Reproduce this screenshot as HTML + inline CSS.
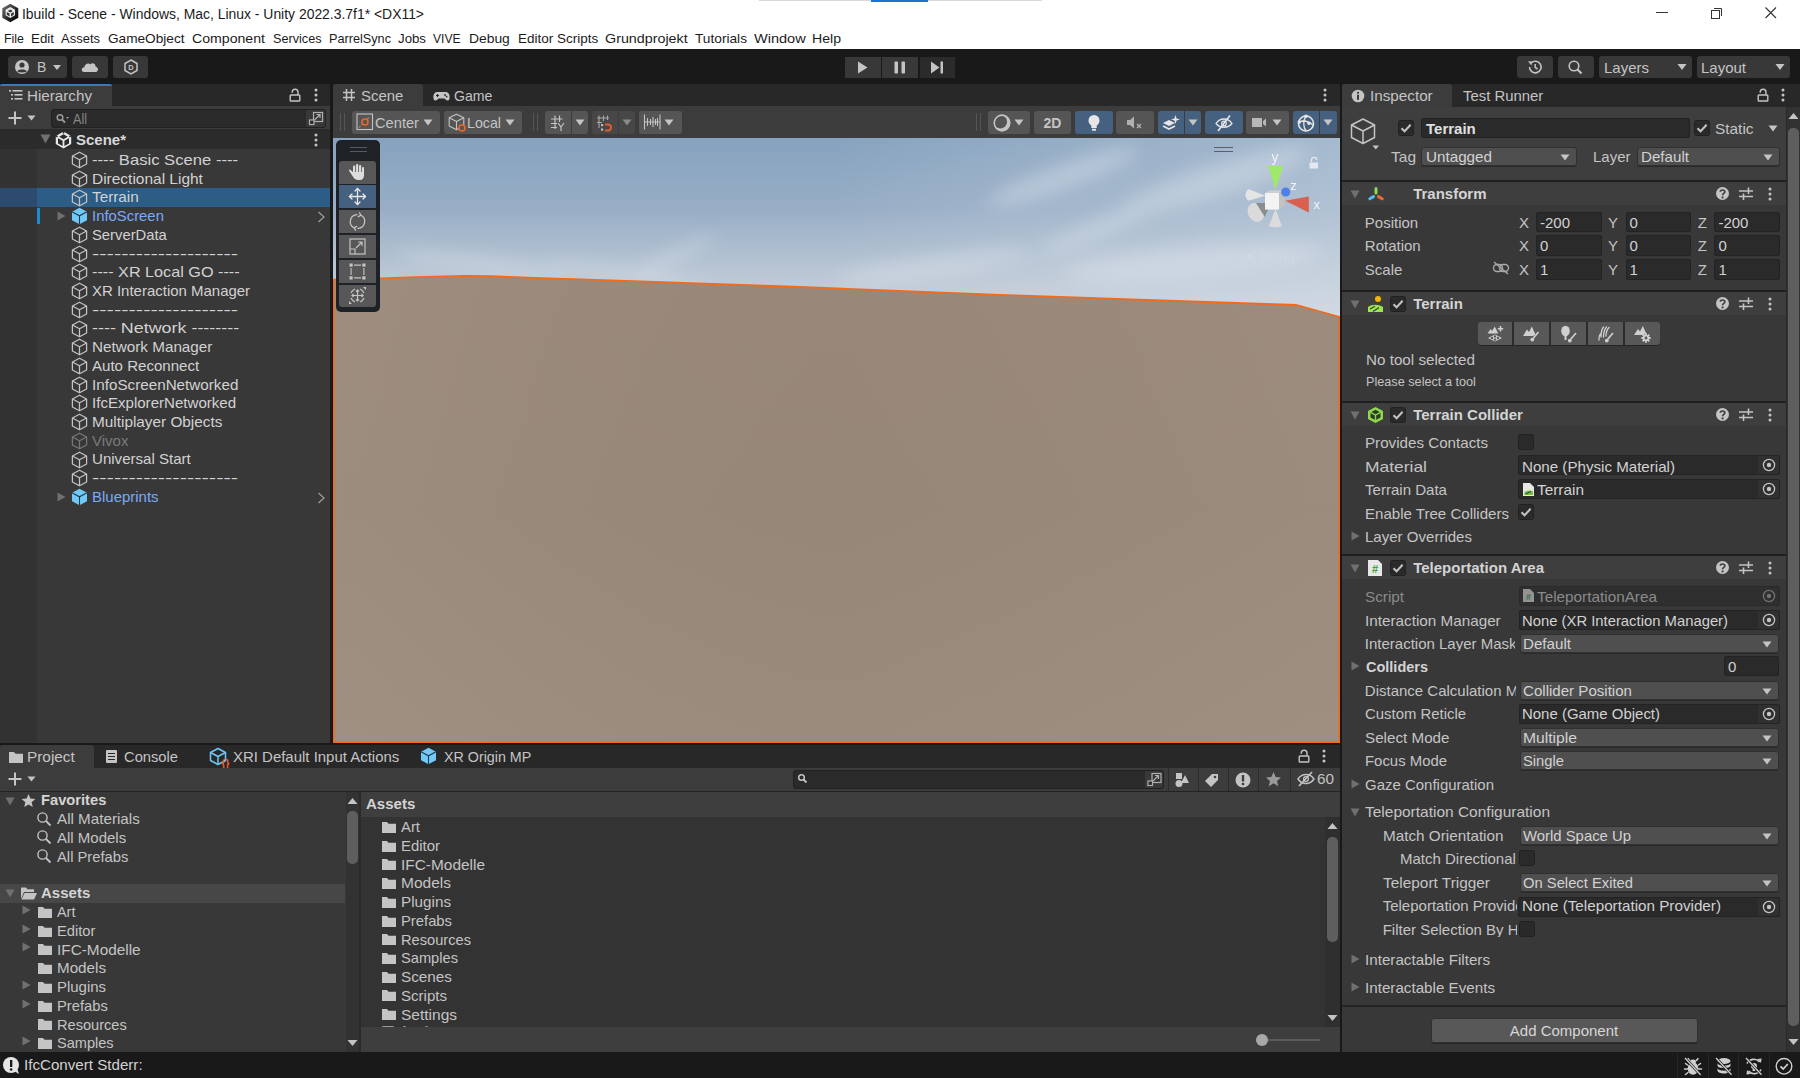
<!DOCTYPE html>
<html><head><meta charset="utf-8"><style>
html,body{margin:0;padding:0;}
body{width:1800px;height:1078px;position:relative;overflow:hidden;background:#191919;font-family:"Liberation Sans",sans-serif;}
.a{position:absolute;}
.t{white-space:nowrap;}
</style></head><body>
<div class="a" style="left:0px;top:0px;width:1800px;height:49px;background:#ffffff;"></div>
<svg class="a" style="left:2px;top:3px;" width="17" height="20" viewBox="0 0 17 20"><defs><linearGradient id="lg" x1="0" y1="0" x2="1" y2="1"><stop offset="0" stop-color="#7a7a7a"/><stop offset="0.6" stop-color="#222"/><stop offset="1" stop-color="#000"/></linearGradient></defs><path d="M8.3 0.7 L16.3 5.2 L16.3 14.8 L8.3 19.3 L0.3 14.8 L0.3 5.2 Z" fill="url(#lg)"/><path d="M8.3 4 L13 6.7 V12.3 L8.3 15 L3.6 12.3 V6.7 Z" fill="#eeeeee"/><path d="M8.3 6.6 L10.8 8 L8.3 9.5 L5.8 8 Z M4.8 9 L7.6 10.6 V13.4 L4.8 11.8 Z M11.8 9 L9 10.6 V13.4 L11.8 11.8 Z" fill="#333"/></svg>
<div class="a t" style="left:22px;top:7.15px;font-size:14px;line-height:14px;color:#1b1b1b;transform:scaleX(0.9941);transform-origin:0 0;">Ibuild - Scene - Windows, Mac, Linux - Unity 2022.3.7f1* &lt;DX11&gt;</div>
<div class="a" style="left:1656px;top:12px;width:12px;height:1px;background:#333;"></div>
<svg class="a" style="left:1708px;top:4px;" width="18" height="18" viewBox="0 0 18 18"><rect x="3.5" y="6.5" width="8" height="8" fill="none" stroke="#333" stroke-width="1"/><path d="M6 4.5 H13.5 V12" fill="none" stroke="#333" stroke-width="1"/></svg>
<svg class="a" style="left:1762px;top:5px;" width="18" height="18" viewBox="0 0 18 18"><path d="M3.5 2.5 L14 13 M14 2.5 L3.5 13" stroke="#333" stroke-width="1.1"/></svg>
<div class="a" style="left:759px;top:0px;width:283px;height:1px;background:#d9d9d9;"></div>
<div class="a" style="left:871px;top:0px;width:57px;height:2px;background:#1e73d2;"></div>
<div class="a t" style="left:4px;top:31.57px;font-size:13.5px;line-height:13.5px;color:#1b1b1b;transform:scaleX(0.9194);transform-origin:0 0;">File</div>
<div class="a t" style="left:31px;top:31.57px;font-size:13.5px;line-height:13.5px;color:#1b1b1b;transform:scaleX(0.9887);transform-origin:0 0;">Edit</div>
<div class="a t" style="left:61px;top:31.57px;font-size:13.5px;line-height:13.5px;color:#1b1b1b;transform:scaleX(0.9626);transform-origin:0 0;">Assets</div>
<div class="a t" style="left:107.5px;top:31.57px;font-size:13.5px;line-height:13.5px;color:#1b1b1b;transform:scaleX(1.0095);transform-origin:0 0;">GameObject</div>
<div class="a t" style="left:192px;top:31.57px;font-size:13.5px;line-height:13.5px;color:#1b1b1b;transform:scaleX(1.0459);transform-origin:0 0;">Component</div>
<div class="a t" style="left:272.5px;top:31.57px;font-size:13.5px;line-height:13.5px;color:#1b1b1b;transform:scaleX(0.9369);transform-origin:0 0;">Services</div>
<div class="a t" style="left:329px;top:31.57px;font-size:13.5px;line-height:13.5px;color:#1b1b1b;transform:scaleX(0.9390);transform-origin:0 0;">ParrelSync</div>
<div class="a t" style="left:398px;top:31.57px;font-size:13.5px;line-height:13.5px;color:#1b1b1b;transform:scaleX(0.9819);transform-origin:0 0;">Jobs</div>
<div class="a t" style="left:433.3px;top:31.57px;font-size:13.5px;line-height:13.5px;color:#1b1b1b;transform:scaleX(0.9004);transform-origin:0 0;">VIVE</div>
<div class="a t" style="left:469px;top:31.57px;font-size:13.5px;line-height:13.5px;color:#1b1b1b;transform:scaleX(1.0256);transform-origin:0 0;">Debug</div>
<div class="a t" style="left:517.5px;top:31.57px;font-size:13.5px;line-height:13.5px;color:#1b1b1b;transform:scaleX(1.0003);transform-origin:0 0;">Editor Scripts</div>
<div class="a t" style="left:605px;top:31.57px;font-size:13.5px;line-height:13.5px;color:#1b1b1b;transform:scaleX(1.0597);transform-origin:0 0;">Grundprojekt</div>
<div class="a t" style="left:695px;top:31.57px;font-size:13.5px;line-height:13.5px;color:#1b1b1b;transform:scaleX(1.0143);transform-origin:0 0;">Tutorials</div>
<div class="a t" style="left:754px;top:31.57px;font-size:13.5px;line-height:13.5px;color:#1b1b1b;transform:scaleX(1.0767);transform-origin:0 0;">Window</div>
<div class="a t" style="left:812px;top:31.57px;font-size:13.5px;line-height:13.5px;color:#1b1b1b;transform:scaleX(1.0445);transform-origin:0 0;">Help</div>
<div class="a" style="left:0px;top:49px;width:1800px;height:35px;background:#191919;"></div>
<div class="a" style="left:8px;top:56px;width:59px;height:22px;background:#383838;border-radius:3px;"></div>
<div class="a" style="left:72px;top:56px;width:36px;height:22px;background:#383838;border-radius:3px;"></div>
<div class="a" style="left:113px;top:56px;width:35px;height:22px;background:#383838;border-radius:3px;"></div>
<svg class="a" style="left:14px;top:59px;" width="16" height="16" viewBox="0 0 16 16"><circle cx="8" cy="8" r="7" fill="#c4c4c4"/><circle cx="8" cy="6" r="2.6" fill="#383838"/><path d="M3.2 12.2 C4.5 9.8 11.5 9.8 12.8 12.2 C11.5 13.8 4.5 13.8 3.2 12.2Z" fill="#383838"/></svg>
<div class="a t" style="left:37px;top:60.15px;font-size:14px;line-height:14px;color:#c4c4c4;">B</div>
<svg class="a" style="left:52px;top:62px;" width="10" height="10" viewBox="0 0 10 10"><path d="M1 3 L9 3 L5 8 Z" fill="#c4c4c4"/></svg>
<svg class="a" style="left:80px;top:59px;" width="20" height="16" viewBox="0 0 20 16"><path d="M4 13 C1 13 1 8.5 4.3 8.3 C4.6 5 8 3.5 10.5 5.2 C11.8 3.5 15.8 4.2 15.6 7.8 C18.8 8 18.8 13 15.6 13 Z" fill="#c4c4c4"/></svg>
<svg class="a" style="left:122px;top:58px;" width="18" height="18" viewBox="0 0 18 18"><path d="M9 2 L15 5.5 L15 12.5 L9 16 L3 12.5 L3 5.5 Z" fill="none" stroke="#c4c4c4" stroke-width="1.5"/><text x="9" y="12.3" font-size="7.5" text-anchor="middle" fill="#c4c4c4" font-family="Liberation Sans" font-weight="bold">D</text></svg>
<div class="a" style="left:845px;top:57px;width:36px;height:21px;background:#383838;"></div>
<div class="a" style="left:882px;top:57px;width:36px;height:21px;background:#383838;"></div>
<div class="a" style="left:920px;top:57px;width:35px;height:21px;background:#2b2b2b;"></div>
<svg class="a" style="left:845px;top:57px;" width="36" height="21" viewBox="0 0 36 21"><path d="M13 4.5 L22.5 10.5 L13 16.5 Z" fill="#c4c4c4"/></svg>
<svg class="a" style="left:882px;top:57px;" width="36" height="21" viewBox="0 0 36 21"><rect x="12.5" y="4.5" width="3.5" height="12" rx="0.8" fill="#c4c4c4"/><rect x="19.5" y="4.5" width="3.5" height="12" rx="0.8" fill="#c4c4c4"/></svg>
<svg class="a" style="left:920px;top:57px;" width="35" height="21" viewBox="0 0 35 21"><path d="M11 4.5 L19.5 10.5 L11 16.5 Z" fill="#c4c4c4"/><rect x="20.5" y="4.5" width="2.5" height="12" fill="#c4c4c4"/></svg>
<div class="a" style="left:1517px;top:56px;width:36px;height:22px;background:#383838;border-radius:3px;"></div>
<div class="a" style="left:1558px;top:56px;width:36px;height:22px;background:#383838;border-radius:3px;"></div>
<div class="a" style="left:1599px;top:56px;width:93px;height:22px;background:#383838;border-radius:3px;"></div>
<div class="a" style="left:1697px;top:56px;width:93px;height:22px;background:#383838;border-radius:3px;"></div>
<svg class="a" style="left:1525px;top:58px;" width="20" height="18" viewBox="0 0 20 18"><path d="M4.5 9 A5.8 5.8 0 1 0 6.2 4.9" fill="none" stroke="#c4c4c4" stroke-width="1.6"/><path d="M3 3.2 L7.2 3.6 L6.4 7.6 Z" fill="#c4c4c4"/><path d="M10.2 6 V9.5 L12.6 11" fill="none" stroke="#c4c4c4" stroke-width="1.5"/></svg>
<svg class="a" style="left:1566px;top:58px;" width="20" height="18" viewBox="0 0 20 18"><circle cx="8" cy="8" r="4.8" fill="none" stroke="#c4c4c4" stroke-width="1.6"/><path d="M11.5 11.5 L15.5 15.5" stroke="#c4c4c4" stroke-width="2.2"/></svg>
<div class="a t" style="left:1604px;top:60.30px;font-size:15px;line-height:15px;color:#c4c4c4;">Layers</div>
<svg class="a" style="left:1677px;top:63px;" width="10" height="8" viewBox="0 0 10 8"><path d="M0.5 1 L9.5 1 L5 7 Z" fill="#c4c4c4"/></svg>
<div class="a t" style="left:1701px;top:60.30px;font-size:15px;line-height:15px;color:#c4c4c4;">Layout</div>
<svg class="a" style="left:1775px;top:63px;" width="10" height="8" viewBox="0 0 10 8"><path d="M0.5 1 L9.5 1 L5 7 Z" fill="#c4c4c4"/></svg>
<div class="a" style="left:0px;top:84px;width:330px;height:22px;background:#282828;"></div>
<div class="a" style="left:0px;top:84px;width:112px;height:22px;background:#3c3c3c;border-radius:3px 3px 0 0;"></div>
<div class="a" style="left:0px;top:84px;width:112px;height:2px;background:#3a79bb;border-radius:3px 3px 0 0;"></div>
<svg class="a" style="left:8px;top:88px;" width="16" height="14" viewBox="0 0 16 14"><g fill="#c4c4c4"><rect x="1" y="2" width="2" height="1.6"/><rect x="4.5" y="2" width="10" height="1.6"/><rect x="3" y="6" width="2" height="1.6"/><rect x="6.5" y="6" width="8" height="1.6"/><rect x="3" y="10" width="2" height="1.6"/><rect x="6.5" y="10" width="8" height="1.6"/></g></svg>
<div class="a t" style="left:27px;top:87.80px;font-size:15px;line-height:15px;color:#c4c4c4;transform:scaleX(1.0127);transform-origin:0 0;">Hierarchy</div>
<svg class="a" style="left:289px;top:88px;" width="12" height="14" viewBox="0 0 12 14"><path d="M3.2 4.8 V4.2 A2.9 2.9 0 0 1 9 4.2 V7" fill="none" stroke="#c4c4c4" stroke-width="1.4"/><rect x="1.2" y="7" width="9.6" height="6" rx="0.8" fill="none" stroke="#c4c4c4" stroke-width="1.4"/></svg>
<svg class="a" style="left:314px;top:88px;" width="4" height="14" viewBox="0 0 4 14"><circle cx="2" cy="2" r="1.5" fill="#c4c4c4"/><circle cx="2" cy="7" r="1.5" fill="#c4c4c4"/><circle cx="2" cy="12" r="1.5" fill="#c4c4c4"/></svg>
<div class="a" style="left:0px;top:106px;width:330px;height:24px;background:#3c3c3c;"></div>
<div class="a" style="left:0px;top:129px;width:330px;height:1px;background:#2a2a2a;"></div>
<svg class="a" style="left:7px;top:110px;" width="16" height="16" viewBox="0 0 16 16"><path d="M8 1.5 V14.5 M1.5 8 H14.5" stroke="#c4c4c4" stroke-width="2"/></svg>
<svg class="a" style="left:27px;top:115px;" width="9" height="6" viewBox="0 0 9 6"><path d="M0.5 0.5 L8.5 0.5 L4.5 5.5 Z" fill="#c4c4c4"/></svg>
<div class="a" style="left:51px;top:109px;width:275px;height:19px;background:#2a2a2a;border-radius:4px;box-shadow:inset 0 0 0 1px #212121;"></div>
<svg class="a" style="left:55px;top:112px;" width="16" height="13" viewBox="0 0 16 13"><circle cx="5" cy="5.5" r="2.8" fill="none" stroke="#9a9a9a" stroke-width="1.5"/><path d="M7 7.5 L10 10.5" stroke="#9a9a9a" stroke-width="1.8"/><path d="M11 5 L14 5 L12.5 7 Z" fill="#9a9a9a"/></svg>
<div class="a t" style="left:73px;top:111.65px;font-size:14px;line-height:14px;color:#858585;transform:scaleX(0.8998);transform-origin:0 0;">All</div>
<div class="a" style="left:306px;top:110px;width:19px;height:17px;background:#383838;border-radius:0 3px 3px 0;"></div>
<svg class="a" style="left:307px;top:110px;" width="18" height="17" viewBox="0 0 18 17"><rect x="6.5" y="2.5" width="9" height="9" fill="none" stroke="#b0b0b0" stroke-width="1.2"/><rect x="2.5" y="10" width="4.5" height="4.5" fill="#2a2a2a" stroke="#b0b0b0" stroke-width="1.2"/><path d="M7.5 10 L13 4.5 M9.5 4.5 H13 V8" fill="none" stroke="#b0b0b0" stroke-width="1.2"/></svg>
<div class="a" style="left:0px;top:130px;width:330px;height:613px;background:#383838;"></div>
<div class="a" style="left:0px;top:148px;width:37px;height:595px;background:#323232;"></div>
<div class="a" style="left:0px;top:130px;width:330px;height:19px;background:#2b2b2b;"></div>
<svg class="a" style="left:40px;top:134px;" width="11" height="10" viewBox="0 0 11 10"><path d="M0.5 0.5 L10.5 0.5 L5.5 9.5 Z" fill="#707070"/></svg>
<svg class="a" style="left:55px;top:131px;" width="17" height="18" viewBox="0 0 17 18"><path d="M8.5 0.6 L16.2 5 L16.2 13 L8.5 17.4 L0.8 13 L0.8 5 Z" fill="#e8e8e8"/><path d="M8.5 3.2 L12.8 5.7 L8.5 8.2 L4.2 5.7 Z" fill="#2b2b2b"/><path d="M3 7.3 L7.6 9.8 V15 L3 12.4 Z M14 7.3 L9.4 9.8 V15 L14 12.4 Z" fill="#2b2b2b"/><path d="M8.5 0 V2.5 M0.5 4.6 L2.6 5.8 M16.5 4.6 L14.4 5.8" stroke="#2b2b2b" stroke-width="1.6"/></svg>
<div class="a t" style="left:76px;top:132.30px;font-size:15px;line-height:15px;color:#d8d8d8;font-weight:bold;transform:scaleX(0.9993);transform-origin:0 0;">Scene*</div>
<svg class="a" style="left:314px;top:133px;" width="4" height="14" viewBox="0 0 4 14"><circle cx="2" cy="2" r="1.5" fill="#c4c4c4"/><circle cx="2" cy="7" r="1.5" fill="#c4c4c4"/><circle cx="2" cy="12" r="1.5" fill="#c4c4c4"/></svg>
<svg class="a" style="left:71px;top:151px;" width="17" height="18" viewBox="0 0 17 18"><g fill="none" stroke="#c4c4c4" stroke-width="1.25" stroke-linejoin="round" opacity="1.0"><path d="M8.5 1.2 L15.6 5 L15.6 13 L8.5 16.8 L1.4 13 L1.4 5 Z"/><path d="M1.4 5 L8.5 8.8 L15.6 5 M8.5 8.8 L8.5 16.8"/></g></svg>
<div class="a t" style="left:91.8px;top:151.90px;font-size:15px;line-height:15px;color:#d2d2d2;transform:scaleX(1.1095);transform-origin:0 0;">---- Basic Scene ----</div>
<svg class="a" style="left:71px;top:170px;" width="17" height="18" viewBox="0 0 17 18"><g fill="none" stroke="#c4c4c4" stroke-width="1.25" stroke-linejoin="round" opacity="1.0"><path d="M8.5 1.2 L15.6 5 L15.6 13 L8.5 16.8 L1.4 13 L1.4 5 Z"/><path d="M1.4 5 L8.5 8.8 L15.6 5 M8.5 8.8 L8.5 16.8"/></g></svg>
<div class="a t" style="left:91.8px;top:170.62px;font-size:15px;line-height:15px;color:#d2d2d2;transform:scaleX(1.0311);transform-origin:0 0;">Directional Light</div>
<div class="a" style="left:0px;top:188px;width:37px;height:19px;background:#2d4b6e;"></div>
<div class="a" style="left:37px;top:188px;width:293px;height:19px;background:#2c5d87;"></div>
<svg class="a" style="left:71px;top:189px;" width="17" height="18" viewBox="0 0 17 18"><g fill="none" stroke="#c4c4c4" stroke-width="1.25" stroke-linejoin="round" opacity="1.0"><path d="M8.5 1.2 L15.6 5 L15.6 13 L8.5 16.8 L1.4 13 L1.4 5 Z"/><path d="M1.4 5 L8.5 8.8 L15.6 5 M8.5 8.8 L8.5 16.8"/></g></svg>
<div class="a t" style="left:91.8px;top:189.34px;font-size:15px;line-height:15px;color:#d2d2d2;transform:scaleX(1.0185);transform-origin:0 0;">Terrain</div>
<svg class="a" style="left:57px;top:211px;" width="9" height="10" viewBox="0 0 9 10"><path d="M0.5 0.5 L8.5 5.0 L0.5 9.5 Z" fill="#707070"/></svg>
<svg class="a" style="left:71px;top:207px;" width="17" height="18" viewBox="0 0 17 18"><path d="M8.5 0.8 L16 4.8 L16 13.2 L8.5 17.2 L1 13.2 L1 4.8 Z" fill="#71c9f7"/><path d="M1 4.8 L8.5 8.8 L16 4.8 M8.5 8.8 L8.5 17.2" fill="none" stroke="#1f3a4e" stroke-width="1.1"/></svg>
<svg class="a" style="left:317px;top:211px;" width="9" height="12" viewBox="0 0 9 12"><path d="M1.5 1 L7 6 L1.5 11" fill="none" stroke="#9a9a9a" stroke-width="1.3"/></svg>
<div class="a t" style="left:91.8px;top:208.06px;font-size:15px;line-height:15px;color:#7baaf7;transform:scaleX(0.9911);transform-origin:0 0;">InfoScreen</div>
<svg class="a" style="left:71px;top:226px;" width="17" height="18" viewBox="0 0 17 18"><g fill="none" stroke="#c4c4c4" stroke-width="1.25" stroke-linejoin="round" opacity="1.0"><path d="M8.5 1.2 L15.6 5 L15.6 13 L8.5 16.8 L1.4 13 L1.4 5 Z"/><path d="M1.4 5 L8.5 8.8 L15.6 5 M8.5 8.8 L8.5 16.8"/></g></svg>
<div class="a t" style="left:91.8px;top:226.78px;font-size:15px;line-height:15px;color:#d2d2d2;transform:scaleX(0.9859);transform-origin:0 0;">ServerData</div>
<svg class="a" style="left:71px;top:245px;" width="17" height="18" viewBox="0 0 17 18"><g fill="none" stroke="#c4c4c4" stroke-width="1.25" stroke-linejoin="round" opacity="1.0"><path d="M8.5 1.2 L15.6 5 L15.6 13 L8.5 16.8 L1.4 13 L1.4 5 Z"/><path d="M1.4 5 L8.5 8.8 L15.6 5 M8.5 8.8 L8.5 16.8"/></g></svg>
<div class="a t" style="left:91.8px;top:245.50px;font-size:15px;line-height:15px;color:#d2d2d2;transform:scaleX(1.4623);transform-origin:0 0;">--------------------</div>
<svg class="a" style="left:71px;top:263px;" width="17" height="18" viewBox="0 0 17 18"><g fill="none" stroke="#c4c4c4" stroke-width="1.25" stroke-linejoin="round" opacity="1.0"><path d="M8.5 1.2 L15.6 5 L15.6 13 L8.5 16.8 L1.4 13 L1.4 5 Z"/><path d="M1.4 5 L8.5 8.8 L15.6 5 M8.5 8.8 L8.5 16.8"/></g></svg>
<div class="a t" style="left:91.8px;top:264.22px;font-size:15px;line-height:15px;color:#d2d2d2;transform:scaleX(1.0800);transform-origin:0 0;">---- XR Local GO ----</div>
<svg class="a" style="left:71px;top:282px;" width="17" height="18" viewBox="0 0 17 18"><g fill="none" stroke="#c4c4c4" stroke-width="1.25" stroke-linejoin="round" opacity="1.0"><path d="M8.5 1.2 L15.6 5 L15.6 13 L8.5 16.8 L1.4 13 L1.4 5 Z"/><path d="M1.4 5 L8.5 8.8 L15.6 5 M8.5 8.8 L8.5 16.8"/></g></svg>
<div class="a t" style="left:91.8px;top:282.94px;font-size:15px;line-height:15px;color:#d2d2d2;transform:scaleX(0.9980);transform-origin:0 0;">XR Interaction Manager</div>
<svg class="a" style="left:71px;top:301px;" width="17" height="18" viewBox="0 0 17 18"><g fill="none" stroke="#c4c4c4" stroke-width="1.25" stroke-linejoin="round" opacity="1.0"><path d="M8.5 1.2 L15.6 5 L15.6 13 L8.5 16.8 L1.4 13 L1.4 5 Z"/><path d="M1.4 5 L8.5 8.8 L15.6 5 M8.5 8.8 L8.5 16.8"/></g></svg>
<div class="a t" style="left:91.8px;top:301.66px;font-size:15px;line-height:15px;color:#d2d2d2;transform:scaleX(1.4623);transform-origin:0 0;">--------------------</div>
<svg class="a" style="left:71px;top:320px;" width="17" height="18" viewBox="0 0 17 18"><g fill="none" stroke="#c4c4c4" stroke-width="1.25" stroke-linejoin="round" opacity="1.0"><path d="M8.5 1.2 L15.6 5 L15.6 13 L8.5 16.8 L1.4 13 L1.4 5 Z"/><path d="M1.4 5 L8.5 8.8 L15.6 5 M8.5 8.8 L8.5 16.8"/></g></svg>
<div class="a t" style="left:91.8px;top:320.38px;font-size:15px;line-height:15px;color:#d2d2d2;transform:scaleX(1.1931);transform-origin:0 0;">---- Network --------</div>
<svg class="a" style="left:71px;top:338px;" width="17" height="18" viewBox="0 0 17 18"><g fill="none" stroke="#c4c4c4" stroke-width="1.25" stroke-linejoin="round" opacity="1.0"><path d="M8.5 1.2 L15.6 5 L15.6 13 L8.5 16.8 L1.4 13 L1.4 5 Z"/><path d="M1.4 5 L8.5 8.8 L15.6 5 M8.5 8.8 L8.5 16.8"/></g></svg>
<div class="a t" style="left:91.8px;top:339.10px;font-size:15px;line-height:15px;color:#d2d2d2;transform:scaleX(1.0170);transform-origin:0 0;">Network Manager</div>
<svg class="a" style="left:71px;top:357px;" width="17" height="18" viewBox="0 0 17 18"><g fill="none" stroke="#c4c4c4" stroke-width="1.25" stroke-linejoin="round" opacity="1.0"><path d="M8.5 1.2 L15.6 5 L15.6 13 L8.5 16.8 L1.4 13 L1.4 5 Z"/><path d="M1.4 5 L8.5 8.8 L15.6 5 M8.5 8.8 L8.5 16.8"/></g></svg>
<div class="a t" style="left:91.8px;top:357.82px;font-size:15px;line-height:15px;color:#d2d2d2;transform:scaleX(1.0043);transform-origin:0 0;">Auto Reconnect</div>
<svg class="a" style="left:71px;top:376px;" width="17" height="18" viewBox="0 0 17 18"><g fill="none" stroke="#c4c4c4" stroke-width="1.25" stroke-linejoin="round" opacity="1.0"><path d="M8.5 1.2 L15.6 5 L15.6 13 L8.5 16.8 L1.4 13 L1.4 5 Z"/><path d="M1.4 5 L8.5 8.8 L15.6 5 M8.5 8.8 L8.5 16.8"/></g></svg>
<div class="a t" style="left:91.8px;top:376.54px;font-size:15px;line-height:15px;color:#d2d2d2;transform:scaleX(1.0149);transform-origin:0 0;">InfoScreenNetworked</div>
<svg class="a" style="left:71px;top:394px;" width="17" height="18" viewBox="0 0 17 18"><g fill="none" stroke="#c4c4c4" stroke-width="1.25" stroke-linejoin="round" opacity="1.0"><path d="M8.5 1.2 L15.6 5 L15.6 13 L8.5 16.8 L1.4 13 L1.4 5 Z"/><path d="M1.4 5 L8.5 8.8 L15.6 5 M8.5 8.8 L8.5 16.8"/></g></svg>
<div class="a t" style="left:91.8px;top:395.26px;font-size:15px;line-height:15px;color:#d2d2d2;transform:scaleX(1.0049);transform-origin:0 0;">IfcExplorerNetworked</div>
<svg class="a" style="left:71px;top:413px;" width="17" height="18" viewBox="0 0 17 18"><g fill="none" stroke="#c4c4c4" stroke-width="1.25" stroke-linejoin="round" opacity="1.0"><path d="M8.5 1.2 L15.6 5 L15.6 13 L8.5 16.8 L1.4 13 L1.4 5 Z"/><path d="M1.4 5 L8.5 8.8 L15.6 5 M8.5 8.8 L8.5 16.8"/></g></svg>
<div class="a t" style="left:91.8px;top:413.98px;font-size:15px;line-height:15px;color:#d2d2d2;transform:scaleX(1.0224);transform-origin:0 0;">Multiplayer Objects</div>
<svg class="a" style="left:71px;top:432px;" width="17" height="18" viewBox="0 0 17 18"><g fill="none" stroke="#c4c4c4" stroke-width="1.25" stroke-linejoin="round" opacity="0.45"><path d="M8.5 1.2 L15.6 5 L15.6 13 L8.5 16.8 L1.4 13 L1.4 5 Z"/><path d="M1.4 5 L8.5 8.8 L15.6 5 M8.5 8.8 L8.5 16.8"/></g></svg>
<div class="a t" style="left:91.8px;top:432.70px;font-size:15px;line-height:15px;color:#7a7a7a;transform:scaleX(1.0025);transform-origin:0 0;">Vivox</div>
<svg class="a" style="left:71px;top:451px;" width="17" height="18" viewBox="0 0 17 18"><g fill="none" stroke="#c4c4c4" stroke-width="1.25" stroke-linejoin="round" opacity="1.0"><path d="M8.5 1.2 L15.6 5 L15.6 13 L8.5 16.8 L1.4 13 L1.4 5 Z"/><path d="M1.4 5 L8.5 8.8 L15.6 5 M8.5 8.8 L8.5 16.8"/></g></svg>
<div class="a t" style="left:91.8px;top:451.42px;font-size:15px;line-height:15px;color:#d2d2d2;transform:scaleX(1.0044);transform-origin:0 0;">Universal Start</div>
<svg class="a" style="left:71px;top:469px;" width="17" height="18" viewBox="0 0 17 18"><g fill="none" stroke="#c4c4c4" stroke-width="1.25" stroke-linejoin="round" opacity="1.0"><path d="M8.5 1.2 L15.6 5 L15.6 13 L8.5 16.8 L1.4 13 L1.4 5 Z"/><path d="M1.4 5 L8.5 8.8 L15.6 5 M8.5 8.8 L8.5 16.8"/></g></svg>
<div class="a t" style="left:91.8px;top:470.14px;font-size:15px;line-height:15px;color:#d2d2d2;transform:scaleX(1.4623);transform-origin:0 0;">--------------------</div>
<svg class="a" style="left:57px;top:492px;" width="9" height="10" viewBox="0 0 9 10"><path d="M0.5 0.5 L8.5 5.0 L0.5 9.5 Z" fill="#707070"/></svg>
<svg class="a" style="left:71px;top:488px;" width="17" height="18" viewBox="0 0 17 18"><path d="M8.5 0.8 L16 4.8 L16 13.2 L8.5 17.2 L1 13.2 L1 4.8 Z" fill="#71c9f7"/><path d="M1 4.8 L8.5 8.8 L16 4.8 M8.5 8.8 L8.5 17.2" fill="none" stroke="#1f3a4e" stroke-width="1.1"/></svg>
<svg class="a" style="left:317px;top:492px;" width="9" height="12" viewBox="0 0 9 12"><path d="M1.5 1 L7 6 L1.5 11" fill="none" stroke="#9a9a9a" stroke-width="1.3"/></svg>
<div class="a t" style="left:91.8px;top:488.86px;font-size:15px;line-height:15px;color:#7baaf7;transform:scaleX(0.9984);transform-origin:0 0;">Blueprints</div>
<div class="a" style="left:37px;top:208px;width:3px;height:16px;background:#1d8ad6;"></div>
<div class="a" style="left:333px;top:84px;width:1007px;height:22px;background:#282828;"></div>
<div class="a" style="left:333px;top:84px;width:90px;height:23px;background:#3c3c3c;border-radius:3px 3px 0 0;"></div>
<svg class="a" style="left:342px;top:88px;" width="14" height="14" viewBox="0 0 14 14"><g stroke="#c4c4c4" stroke-width="1.5"><path d="M4.5 1 V13 M9.5 1 V13 M1 4.5 H13 M1 9.5 H13"/></g></svg>
<div class="a t" style="left:361px;top:87.80px;font-size:15px;line-height:15px;color:#c4c4c4;transform:scaleX(0.9945);transform-origin:0 0;">Scene</div>
<svg class="a" style="left:433px;top:90px;" width="17" height="12" viewBox="0 0 17 12"><path d="M4 2 H13 C16 2 17 6 16.5 8.5 C16 11 14 11 12.5 9.5 L11.5 8.5 H5.5 L4.5 9.5 C3 11 1 11 0.5 8.5 C0 6 1 2 4 2Z" fill="#c4c4c4"/><path d="M3 5.5 H6 M4.5 4 V7" stroke="#282828" stroke-width="1.1"/><circle cx="12" cy="5" r="0.9" fill="#282828"/><circle cx="13.6" cy="6.6" r="0.9" fill="#282828"/></svg>
<div class="a t" style="left:453.6px;top:87.80px;font-size:15px;line-height:15px;color:#c4c4c4;transform:scaleX(0.9401);transform-origin:0 0;">Game</div>
<svg class="a" style="left:1323px;top:88px;" width="4" height="14" viewBox="0 0 4 14"><circle cx="2" cy="2" r="1.5" fill="#c4c4c4"/><circle cx="2" cy="7" r="1.5" fill="#c4c4c4"/><circle cx="2" cy="12" r="1.5" fill="#c4c4c4"/></svg>
<div class="a" style="left:333px;top:106px;width:1007px;height:31px;background:#3c3c3c;"></div>
<div class="a" style="left:340px;top:113px;width:1px;height:18px;background:#555555;"></div>
<div class="a" style="left:344px;top:113px;width:1px;height:18px;background:#555555;"></div>
<div class="a" style="left:352px;top:111px;width:88px;height:23px;background:#555555;border-radius:3px;"></div>
<svg class="a" style="left:356px;top:113px;" width="18" height="18" viewBox="0 0 18 18"><rect x="1" y="1" width="15.5" height="15.5" fill="none" stroke="#c4c4c4" stroke-width="1.1"/><path d="M3 14.5 L14.5 3" stroke="#c4c4c4" stroke-width="1" stroke-dasharray="2 2"/><circle cx="9" cy="9" r="3" fill="#555555" stroke="#f0642a" stroke-width="1.6"/></svg>
<div class="a t" style="left:375px;top:114.50px;font-size:15px;line-height:15px;color:#c4c4c4;transform:scaleX(0.9773);transform-origin:0 0;">Center</div>
<svg class="a" style="left:423px;top:119px;" width="10" height="7" viewBox="0 0 10 7"><path d="M0.5 0.5 L9.5 0.5 L5 6.5 Z" fill="#c4c4c4"/></svg>
<div class="a" style="left:444px;top:111px;width:78px;height:23px;background:#555555;border-radius:3px;"></div>
<svg class="a" style="left:448px;top:113px;" width="20" height="20" viewBox="0 0 20 20"><g fill="none" stroke="#c4c4c4" stroke-width="1.1" stroke-linejoin="round"><path d="M8.5 1.2 L15.8 4.8 L15.8 13 L8.5 16.8 L1.2 13 L1.2 4.8 Z"/><path d="M1.2 4.8 L8.5 8.6 L15.8 4.8 M8.5 8.6 V16.8"/></g><circle cx="14" cy="15" r="3" fill="#555555" stroke="#f0642a" stroke-width="1.6"/></svg>
<div class="a t" style="left:467.4px;top:114.50px;font-size:15px;line-height:15px;color:#c4c4c4;transform:scaleX(0.9481);transform-origin:0 0;">Local</div>
<svg class="a" style="left:505px;top:119px;" width="10" height="7" viewBox="0 0 10 7"><path d="M0.5 0.5 L9.5 0.5 L5 6.5 Z" fill="#c4c4c4"/></svg>
<div class="a" style="left:533px;top:113px;width:1px;height:18px;background:#555555;"></div>
<div class="a" style="left:537px;top:113px;width:1px;height:18px;background:#555555;"></div>
<div class="a" style="left:545px;top:111px;width:26px;height:23px;background:#555555;border-radius:3px 0 0 3px;"></div>
<div class="a" style="left:572px;top:111px;width:16px;height:23px;background:#555555;border-radius:0 3px 3px 0;"></div>
<svg class="a" style="left:549px;top:114px;" width="18" height="18" viewBox="0 0 18 18"><g stroke="#c4c4c4" stroke-width="1.2" fill="none"><path d="M6 1.5 V15 M10.5 1.5 V8 M2 5 H13.5 M2 9.5 H8 M2 13.5 H8"/><path d="M9 9 L12 13 L15 9 M12 13 V17"/></g></svg>
<svg class="a" style="left:575px;top:119px;" width="10" height="7" viewBox="0 0 10 7"><path d="M0.5 0.5 L9.5 0.5 L5 6.5 Z" fill="#c4c4c4"/></svg>
<div class="a" style="left:592px;top:111px;width:26px;height:23px;background:#474747;border-radius:3px 0 0 3px;"></div>
<div class="a" style="left:619px;top:111px;width:16px;height:23px;background:#474747;border-radius:0 3px 3px 0;"></div>
<svg class="a" style="left:596px;top:114px;" width="18" height="18" viewBox="0 0 18 18"><g stroke="#b8b8b8" stroke-width="1.1" fill="none" opacity="0.85"><path d="M3 1.5 V14 M7.5 1.5 V7 M11.5 1.5 V6 M1 4 H13 M1 8.5 H6"/></g><rect x="5" y="10" width="2.2" height="2.2" fill="#bbb"/><rect x="5" y="14.5" width="2.2" height="2.2" fill="#bbb"/><path d="M9 10.5 H12 A3 3 0 0 1 12 16.5 H9" fill="none" stroke="#e0602a" stroke-width="1.8"/></svg>
<svg class="a" style="left:622px;top:119px;" width="10" height="7" viewBox="0 0 10 7"><path d="M0.5 0.5 L9.5 0.5 L5 6.5 Z" fill="#8a8a8a"/></svg>
<div class="a" style="left:639px;top:111px;width:43px;height:23px;background:#555555;border-radius:3px;"></div>
<svg class="a" style="left:643px;top:114px;" width="20" height="17" viewBox="0 0 20 17"><g stroke="#c4c4c4" stroke-width="1.1"><path d="M1.5 0.5 V15.5 M17 0.5 V15.5 M1.5 8 H17"/><path d="M4.5 4 V12 M7.5 5 V11 M10 3 V13 M12.5 5 V11 M14.5 4 V12"/></g></svg>
<svg class="a" style="left:664px;top:119px;" width="10" height="7" viewBox="0 0 10 7"><path d="M0.5 0.5 L9.5 0.5 L5 6.5 Z" fill="#c4c4c4"/></svg>
<div class="a" style="left:976px;top:113px;width:1px;height:18px;background:#555555;"></div>
<div class="a" style="left:980px;top:113px;width:1px;height:18px;background:#555555;"></div>
<div class="a" style="left:988px;top:111px;width:42px;height:23px;background:#555555;border-radius:3px;"></div>
<svg class="a" style="left:992px;top:113px;" width="20" height="20" viewBox="0 0 20 20"><circle cx="10" cy="10" r="8.4" fill="#c4c4c4"/><circle cx="8.4" cy="8.7" r="6.7" fill="#555555"/><circle cx="10" cy="10" r="7.7" fill="none" stroke="#c4c4c4" stroke-width="1.4"/></svg>
<svg class="a" style="left:1014px;top:119px;" width="10" height="7" viewBox="0 0 10 7"><path d="M0.5 0.5 L9.5 0.5 L5 6.5 Z" fill="#c4c4c4"/></svg>
<div class="a" style="left:1034px;top:111px;width:37px;height:23px;background:#555555;border-radius:3px;"></div>
<div class="a t" style="left:752.5px;width:600px;text-align:center;top:115.65px;font-size:14px;line-height:14px;color:#c4c4c4;font-weight:bold;">2D</div>
<div class="a" style="left:1075px;top:111px;width:38px;height:23px;background:#46607f;border-radius:3px;"></div>
<svg class="a" style="left:1085px;top:113px;" width="18" height="20" viewBox="0 0 18 20"><circle cx="9" cy="7.5" r="5.5" fill="#e6e6e6"/><rect x="6.3" y="11.5" width="5.4" height="3.5" fill="#e6e6e6"/><rect x="6.8" y="15.8" width="4.4" height="2" rx="1" fill="#e6e6e6"/></svg>
<div class="a" style="left:1116px;top:111px;width:38px;height:23px;background:#555555;border-radius:3px;"></div>
<svg class="a" style="left:1125px;top:113px;" width="20" height="20" viewBox="0 0 20 20"><path d="M2 7 H5 L9 3.5 V15.5 L5 12 H2 Z" fill="#b0b0b0"/><path d="M12 11 L16 15 M16 11 L12 15" stroke="#b0b0b0" stroke-width="1.3"/></svg>
<div class="a" style="left:1158px;top:111px;width:26px;height:23px;background:#46607f;border-radius:3px 0 0 3px;"></div>
<div class="a" style="left:1185px;top:111px;width:16px;height:23px;background:#46607f;border-radius:0 3px 3px 0;"></div>
<svg class="a" style="left:1161px;top:113px;" width="20" height="20" viewBox="0 0 20 20"><path d="M2 10 L8 7 L14 10 L8 13 Z" fill="#e6e6e6"/><path d="M2 13 L8 16 L14 13" fill="none" stroke="#e6e6e6" stroke-width="1.6"/><path d="M14.5 2 L15.6 5.4 L19 6.5 L15.6 7.6 L14.5 11 L13.4 7.6 L10 6.5 L13.4 5.4 Z" fill="#e6e6e6"/></svg>
<svg class="a" style="left:1188px;top:119px;" width="10" height="7" viewBox="0 0 10 7"><path d="M0.5 0.5 L9.5 0.5 L5 6.5 Z" fill="#c4c4c4"/></svg>
<div class="a" style="left:1205px;top:111px;width:38px;height:23px;background:#46607f;border-radius:3px;"></div>
<svg class="a" style="left:1214px;top:113px;" width="20" height="20" viewBox="0 0 20 20"><path d="M2 10.5 C6 4.5 14 4.5 18 10.5 C14 15.5 6 15.5 2 10.5Z" fill="none" stroke="#e6e6e6" stroke-width="1.3"/><circle cx="10" cy="10.5" r="2.3" fill="none" stroke="#e6e6e6" stroke-width="1.2"/><path d="M4 18 L16 2.5" stroke="#e6e6e6" stroke-width="1.6"/></svg>
<div class="a" style="left:1246px;top:111px;width:43px;height:23px;background:#555555;border-radius:3px;"></div>
<svg class="a" style="left:1251px;top:115px;" width="20" height="15" viewBox="0 0 20 15"><rect x="1" y="3" width="10" height="9" fill="#b8b8b8"/><path d="M12 6 L15 3.5 V11.5 L12 9Z" fill="#b8b8b8"/></svg>
<svg class="a" style="left:1272px;top:119px;" width="10" height="7" viewBox="0 0 10 7"><path d="M0.5 0.5 L9.5 0.5 L5 6.5 Z" fill="#c4c4c4"/></svg>
<div class="a" style="left:1293px;top:111px;width:26px;height:23px;background:#46607f;border-radius:3px 0 0 3px;"></div>
<div class="a" style="left:1320px;top:111px;width:17px;height:23px;background:#46607f;border-radius:0 3px 3px 0;"></div>
<svg class="a" style="left:1296px;top:113px;" width="20" height="20" viewBox="0 0 20 20"><circle cx="10" cy="10.5" r="7.5" fill="none" stroke="#e6e6e6" stroke-width="1.6"/><path d="M3 9 C7 7 13 8 17 12 M10 3 C7 7 7 14 10 18" fill="none" stroke="#e6e6e6" stroke-width="1.3"/><circle cx="10" cy="3.2" r="1.8" fill="#e6e6e6"/><circle cx="3.3" cy="9" r="1.8" fill="#e6e6e6"/><circle cx="13" cy="10.2" r="1.8" fill="#e6e6e6"/></svg>
<svg class="a" style="left:1323px;top:119px;" width="10" height="7" viewBox="0 0 10 7"><path d="M0.5 0.5 L9.5 0.5 L5 6.5 Z" fill="#c4c4c4"/></svg>
<svg class="a" style="left:333px;top:137px;" width="1007" height="606" viewBox="0 0 1007 606"><defs>
<linearGradient id="sky" gradientUnits="userSpaceOnUse" x1="0" y1="0" x2="0" y2="180">
<stop offset="0" stop-color="#86a2be"/><stop offset="0.4" stop-color="#98aec6"/><stop offset="0.75" stop-color="#b9c6d4"/><stop offset="1" stop-color="#cad3dd"/></linearGradient>
<linearGradient id="skyr" gradientUnits="userSpaceOnUse" x1="500" y1="0" x2="1007" y2="0">
<stop offset="0" stop-color="#dfe6ee" stop-opacity="0"/><stop offset="1" stop-color="#dfe6ee" stop-opacity="0.35"/></linearGradient>
<linearGradient id="ter" gradientUnits="userSpaceOnUse" x1="0" y1="140" x2="0" y2="606">
<stop offset="0" stop-color="#9b8a7b"/><stop offset="0.5" stop-color="#99897a"/><stop offset="1" stop-color="#9d8d7f"/></linearGradient>
<linearGradient id="terx" gradientUnits="userSpaceOnUse" x1="0" y1="0" x2="1007" y2="0">
<stop offset="0" stop-color="#ffffff" stop-opacity="0.03"/><stop offset="0.5" stop-color="#000000" stop-opacity="0.015"/><stop offset="1" stop-color="#ffffff" stop-opacity="0.02"/></linearGradient>
<filter id="blur" x="-50%" y="-50%" width="200%" height="200%"><feGaussianBlur stdDeviation="9"/></filter>
</defs>
<rect x="0" y="0" width="1007" height="606" fill="url(#sky)"/>
<rect x="0" y="0" width="1007" height="180" fill="url(#skyr)"/>
<g filter="url(#blur)" fill="#e2e8ef" opacity="0.4">
<ellipse cx="150" cy="128" rx="90" ry="7" transform="rotate(8 150 128)"/>
<ellipse cx="300" cy="140" rx="90" ry="6" transform="rotate(10 300 140)"/>
<ellipse cx="340" cy="120" rx="50" ry="6" transform="rotate(-25 340 120)"/>
<ellipse cx="600" cy="130" rx="100" ry="10" transform="rotate(-8 600 130)"/>
<ellipse cx="730" cy="40" rx="80" ry="12" transform="rotate(-20 730 40)"/>
<ellipse cx="880" cy="45" rx="100" ry="16" transform="rotate(-18 880 45)"/>
<ellipse cx="860" cy="125" rx="130" ry="16" transform="rotate(-5 860 125)"/>
<ellipse cx="770" cy="90" rx="70" ry="9" transform="rotate(-22 770 90)"/>
</g>
<path d="M0 142.7 L48 141.3 L83 140.2 L133 138.8 L158 139.2 L200 140.8 L300 144.2 L467 150 L667 157.8 L963 168 L1007 180 L1007 606 L0 606 Z" fill="url(#ter)"/><path d="M0 142.7 L48 141.3 L83 140.2 L133 138.8 L158 139.2 L200 140.8 L300 144.2 L467 150 L667 157.8 L963 168 L1007 180 L1007 606 L0 606 Z" fill="url(#terx)"/><path d="M0 142.7 L48 141.3 L83 140.2 L133 138.8 L158 139.2 L200 140.8 L300 144.2 L467 150 L667 157.8 L963 168 L1007 180" fill="none" stroke="#f26a1c" stroke-width="1.8"/><path d="M0.8 142.7 V605.2 H1006.2 V180" fill="none" stroke="#f26a1c" stroke-width="1.6"/></svg>
<div class="a" style="left:333px;top:137px;width:1007px;height:1px;background:#3a3f47;"></div>
<div class="a" style="left:336px;top:140px;width:44px;height:172px;background:#1e2226;border-radius:5px;"></div>
<div class="a" style="left:350px;top:147px;width:17px;height:1px;background:#555b60;"></div>
<div class="a" style="left:350px;top:151px;width:17px;height:1px;background:#555b60;"></div>
<div class="a" style="left:339px;top:161px;width:37px;height:23px;background:#575757;border-radius:3px 3px 0 0;"></div>
<div class="a" style="left:339px;top:185px;width:37px;height:23px;background:#46607f;border-radius:0;"></div>
<div class="a" style="left:339px;top:210px;width:37px;height:23px;background:#575757;border-radius:0;"></div>
<div class="a" style="left:339px;top:235px;width:37px;height:23px;background:#575757;border-radius:0;"></div>
<div class="a" style="left:339px;top:260px;width:37px;height:23px;background:#575757;border-radius:0;"></div>
<div class="a" style="left:339px;top:285px;width:37px;height:22px;background:#575757;border-radius:0 0 3px 3px;"></div>
<svg class="a" style="left:347px;top:162px;" width="21" height="21" viewBox="0 0 21 21"><g fill="#dcdcdc"><rect x="6" y="3.5" width="2.2" height="9" rx="1.1"/><rect x="9" y="2" width="2.2" height="10" rx="1.1"/><rect x="12" y="3" width="2.2" height="9" rx="1.1"/><rect x="15" y="5" width="2" height="8" rx="1"/><path d="M6 10 L3.2 7.8 C2.2 7.2 1.5 8.2 2.2 9 L6.5 15.5 C7.5 17 9 18 11 18 H13 C15.5 18 17 16 17 13.5 V10 Z"/></g></svg>
<svg class="a" style="left:347px;top:186px;" width="21" height="21" viewBox="0 0 21 21"><g stroke="#e8e8e8" stroke-width="1.3" fill="none" stroke-linecap="round" stroke-linejoin="round"><path d="M10.5 2.5 V18.5 M2.5 10.5 H18.5"/><path d="M8 5 L10.5 2.5 L13 5 M8 16 L10.5 18.5 L13 16 M5 8 L2.5 10.5 L5 13 M16 8 L18.5 10.5 L16 13"/></g></svg>
<svg class="a" style="left:347px;top:211px;" width="21" height="21" viewBox="0 0 21 21"><g fill="none" stroke="#c4c4c4" stroke-width="1.3" stroke-linecap="round"><path d="M13.5 4 A7 7 0 0 1 11 17.4"/><path d="M7.5 17 A7 7 0 0 1 10 3.6"/><path d="M12.5 1.8 L13.8 4.2 L11.3 5.6 M8.5 19.2 L7.2 16.8 L9.7 15.4"/></g></svg>
<svg class="a" style="left:347px;top:236px;" width="21" height="21" viewBox="0 0 21 21"><g fill="none" stroke="#c4c4c4" stroke-width="1.2"><rect x="3" y="3" width="15" height="15"/><path d="M3 13 H8 V18"/><path d="M9 12 L15 6 M11 6 H15 V10"/></g></svg>
<svg class="a" style="left:347px;top:261px;" width="21" height="21" viewBox="0 0 21 21"><g fill="#c4c4c4"><rect x="2.5" y="2.5" width="3.2" height="3.2"/><rect x="15.3" y="2.5" width="3.2" height="3.2"/><rect x="2.5" y="15.3" width="3.2" height="3.2"/><rect x="15.3" y="15.3" width="3.2" height="3.2"/></g><g stroke="#c4c4c4" stroke-width="1.1"><path d="M7 4.1 H14 M7 16.9 H14 M4.1 7 V14 M16.9 7 V14"/></g></svg>
<svg class="a" style="left:347px;top:285px;" width="21" height="21" viewBox="0 0 21 21"><g fill="none" stroke="#c4c4c4" stroke-width="1.2"><path d="M4 8 A7 7 0 0 1 8 4 M13 4 A7 7 0 0 1 17 8 M17 13 A7 7 0 0 1 13 17 M8 17 A7 7 0 0 1 4 13"/><path d="M10.5 5 V16 M5 10.5 H16 M9 6.5 L10.5 5 L12 6.5 M9 14.5 L10.5 16 L12 14.5 M6.5 9 L5 10.5 L6.5 12 M14.5 9 L16 10.5 L14.5 12"/></g><path d="M16 2 L19 2 L19 5Z M2 19 L2 16 L5 19Z" fill="#c4c4c4"/></svg>
<div class="a" style="left:1214px;top:147px;width:19px;height:1px;background:#5a6068;"></div>
<div class="a" style="left:1214px;top:151px;width:19px;height:1px;background:#5a6068;"></div>
<svg class="a" style="left:1240px;top:150px;" width="90" height="85" viewBox="0 0 90 85">
<path d="M8.5 39 C4.5 42 4.5 48 8.5 50.8 L25.2 45.7 Z" fill="#e4e4e4"/>
<ellipse cx="16" cy="62.4" rx="8" ry="9.8" fill="#dadada" transform="rotate(-28 16 62.4)"/>
<path d="M16 53 L30.8 53 L24.8 67 Z" fill="#8a8d90"/>
<path d="M35.5 59 L29 76 Q35.5 78.5 41.8 76 Z" fill="#dcdcdc"/>
<path d="M25 43 L30 40.6 L44.7 40.6 L39 43 Z" fill="#cfcfcf"/>
<path d="M39 43 L44.7 40.6 L44.7 56 L39 59.6 Z" fill="#c2c2c2"/>
<path d="M25 43 L39 43 L39 59.6 L25 59.6 Z" fill="#f3f3f3"/>
<path d="M28 16 L43.3 16 L35.5 39.6 Z" fill="#9ee86a"/>
<circle cx="45.7" cy="42" r="4.6" fill="#4f80e8"/>
<path d="M45.2 50.8 L68.8 46.6 L68.8 62.4 Z" fill="#d9604e"/>
</svg>
<div class="a t" style="left:975px;width:600px;text-align:center;top:150.45px;font-size:14px;line-height:14px;color:#f4f4f4;">y</div>
<div class="a t" style="left:993.5px;width:600px;text-align:center;top:178.60px;font-size:13px;line-height:13px;color:#f4f4f4;">z</div>
<div class="a t" style="left:1016.7px;width:600px;text-align:center;top:197.60px;font-size:13px;line-height:13px;color:#f4f4f4;">x</div>
<svg class="a" style="left:1308px;top:156px;" width="12" height="14" viewBox="0 0 12 14"><path d="M3.5 6 V4 A2.6 2.6 0 0 1 8.7 4" fill="none" stroke="#e4e9ee" stroke-width="1.3"/><rect x="1.5" y="6.5" width="8.5" height="6" fill="#e4e9ee"/></svg>
<div class="a t" style="left:1246px;top:249.46px;font-size:16px;line-height:16px;color:#d3dbe4;">&lt;</div>
<div class="a t" style="left:1260px;top:251.15px;font-size:14px;line-height:14px;color:#cfd7e0;transform:scaleX(1.0663);transform-origin:0 0;">Persp</div>
<div class="a" style="left:1342px;top:84px;width:458px;height:23px;background:#282828;"></div>
<div class="a" style="left:1342px;top:84px;width:110px;height:23px;background:#3c3c3c;border-radius:3px 3px 0 0;"></div>
<svg class="a" style="left:1351px;top:89px;" width="14" height="14" viewBox="0 0 14 14"><circle cx="7" cy="7" r="6.3" fill="#c4c4c4"/><rect x="6" y="5.8" width="2" height="5" fill="#3c3c3c"/><circle cx="7" cy="3.8" r="1.1" fill="#3c3c3c"/></svg>
<div class="a t" style="left:1370px;top:88.30px;font-size:15px;line-height:15px;color:#c4c4c4;transform:scaleX(1.0162);transform-origin:0 0;">Inspector</div>
<div class="a t" style="left:1462.7px;top:88.30px;font-size:15px;line-height:15px;color:#c4c4c4;transform:scaleX(0.9929);transform-origin:0 0;">Test Runner</div>
<svg class="a" style="left:1757px;top:88px;" width="12" height="14" viewBox="0 0 12 14"><path d="M3.2 4.8 V4.2 A2.9 2.9 0 0 1 9 4.2 V7" fill="none" stroke="#c4c4c4" stroke-width="1.4"/><rect x="1.2" y="7" width="9.6" height="6" rx="0.8" fill="none" stroke="#c4c4c4" stroke-width="1.4"/></svg>
<svg class="a" style="left:1781px;top:88px;" width="4" height="14" viewBox="0 0 4 14"><circle cx="2" cy="2" r="1.5" fill="#c4c4c4"/><circle cx="2" cy="7" r="1.5" fill="#c4c4c4"/><circle cx="2" cy="12" r="1.5" fill="#c4c4c4"/></svg>
<div class="a" style="left:1342px;top:107px;width:444px;height:945px;background:#383838;"></div>
<div class="a" style="left:1786px;top:107px;width:14px;height:945px;background:#323232;"></div>
<div class="a" style="left:1786px;top:107px;width:1px;height:945px;background:#2a2a2a;"></div>
<div class="a" style="left:1788px;top:128px;width:11px;height:898px;background:#5e5e5e;border-radius:5px;"></div>
<svg class="a" style="left:1788px;top:112px;" width="11" height="8" viewBox="0 0 11 8"><path d="M0.5 7 L10.5 7 L5.5 1 Z" fill="#c4c4c4"/></svg>
<svg class="a" style="left:1788px;top:1038px;" width="11" height="8" viewBox="0 0 11 8"><path d="M0.5 1 L10.5 1 L5.5 7 Z" fill="#c4c4c4"/></svg>
<div class="a" style="left:1342px;top:107px;width:444px;height:73px;background:#3e3e3e;"></div>
<svg class="a" style="left:1349px;top:117px;" width="32" height="34" viewBox="0 0 32 34"><g fill="none" stroke="#c4c4c4" stroke-width="1.5" stroke-linejoin="round"><path d="M14 2 L25.5 8 L25.5 20.5 L14 26.5 L2.5 20.5 L2.5 8 Z"/><path d="M2.5 8 L14 14 L25.5 8 M14 14 V26.5"/></g><path d="M23.5 28.5 L30 28.5 L26.75 32.5 Z" fill="#c4c4c4"/></svg>
<svg class="a" style="left:1398px;top:120px;" width="16" height="16" viewBox="0 0 16 16"><rect x="0.5" y="0.5" width="15" height="15" rx="2" fill="#2a2a2a" stroke="#212121"/><path d="M3.5 8.2 L6.6 11.2 L12.6 4.8" fill="none" stroke="#c4c4c4" stroke-width="2"/></svg>
<div class="a" style="left:1421px;top:118px;width:269px;height:20px;background:#2a2a2a;border-radius:3px;box-shadow:inset 0 0 0 1px #232323;"></div>
<div class="a t" style="left:1426px;top:121.30px;font-size:15px;line-height:15px;color:#e0e0e0;font-weight:bold;">Terrain</div>
<svg class="a" style="left:1694px;top:120px;" width="16" height="16" viewBox="0 0 16 16"><rect x="0.5" y="0.5" width="15" height="15" rx="2" fill="#2a2a2a" stroke="#212121"/><path d="M3.5 8.2 L6.6 11.2 L12.6 4.8" fill="none" stroke="#c4c4c4" stroke-width="2"/></svg>
<div class="a t" style="left:1715px;top:121.30px;font-size:15px;line-height:15px;color:#c4c4c4;transform:scaleX(1.0262);transform-origin:0 0;">Static</div>
<svg class="a" style="left:1768px;top:125px;" width="10" height="7" viewBox="0 0 10 7"><path d="M0.5 0.5 L9.5 0.5 L5 6.5 Z" fill="#c4c4c4"/></svg>
<div class="a t" style="left:1390.5px;top:149.30px;font-size:15px;line-height:15px;color:#c4c4c4;transform:scaleX(1.0337);transform-origin:0 0;">Tag</div>
<div class="a" style="left:1421px;top:147px;width:156px;height:19px;background:#4f4f4f;border-radius:3px;box-shadow:inset 0 0 0 1px #303030, 0 1px 0 #2a2a2a;"></div>
<svg class="a" style="left:1560px;top:154px;" width="10" height="7" viewBox="0 0 10 7"><path d="M0.5 0.5 L9.5 0.5 L5 6.5 Z" fill="#c4c4c4"/></svg>
<div class="a t" style="left:1426px;top:149.30px;font-size:15px;line-height:15px;color:#d2d2d2;transform:scaleX(1.0145);transform-origin:0 0;">Untagged</div>
<div class="a t" style="left:1592.5px;top:149.30px;font-size:15px;line-height:15px;color:#c4c4c4;transform:scaleX(0.9994);transform-origin:0 0;">Layer</div>
<div class="a" style="left:1636.5px;top:147px;width:143.0px;height:19px;background:#4f4f4f;border-radius:3px;box-shadow:inset 0 0 0 1px #303030, 0 1px 0 #2a2a2a;"></div>
<svg class="a" style="left:1762.5px;top:154px;" width="10" height="7" viewBox="0 0 10 7"><path d="M0.5 0.5 L9.5 0.5 L5 6.5 Z" fill="#c4c4c4"/></svg>
<div class="a t" style="left:1641px;top:149.30px;font-size:15px;line-height:15px;color:#d2d2d2;transform:scaleX(1.0099);transform-origin:0 0;">Default</div>
<div class="a" style="left:1342px;top:180px;width:444px;height:2px;background:#1f1f1f;"></div>
<div class="a" style="left:1342px;top:182px;width:444px;height:23px;background:#3e3e3e;"></div>
<svg class="a" style="left:1350px;top:190px;" width="10" height="9" viewBox="0 0 10 9"><path d="M0.5 0.5 L9.5 0.5 L5.0 8.5 Z" fill="#707070"/></svg>
<svg class="a" style="left:1366px;top:186px;" width="20" height="18" viewBox="0 0 20 18"><path d="M10 2.5 V7" stroke="#8fd94e" stroke-width="3" stroke-linecap="round"/><path d="M7.5 10.6 L3.8 12.8" stroke="#4fc0f0" stroke-width="3" stroke-linecap="round"/><path d="M12.5 10.6 L16.2 12.8" stroke="#ee6a3a" stroke-width="3" stroke-linecap="round"/></svg>
<div class="a t" style="left:1413.2px;top:186.30px;font-size:15px;line-height:15px;color:#d4d4d4;font-weight:bold;">Transform</div>
<svg class="a" style="left:1715px;top:186px;" width="15" height="15" viewBox="0 0 15 15"><circle cx="7.5" cy="7.5" r="6.5" fill="#c4c4c4"/><path d="M5.3 5.8 C5.3 3.4 9.8 3.4 9.8 5.8 C9.8 7.4 7.6 7.4 7.6 9.2" fill="none" stroke="#3e3e3e" stroke-width="1.7"/><circle cx="7.6" cy="11.4" r="1.05" fill="#3e3e3e"/></svg>
<svg class="a" style="left:1738px;top:186px;" width="16" height="15" viewBox="0 0 16 15"><g stroke="#c4c4c4" stroke-width="1.6"><path d="M1 5 H15 M1 10.5 H15"/><path d="M10.5 1.5 V8 M5.5 7.5 V14"/></g></svg>
<svg class="a" style="left:1768px;top:187px;" width="4" height="14" viewBox="0 0 4 14"><circle cx="2" cy="2" r="1.5" fill="#c4c4c4"/><circle cx="2" cy="7" r="1.5" fill="#c4c4c4"/><circle cx="2" cy="12" r="1.5" fill="#c4c4c4"/></svg>
<div class="a t" style="left:1364.8px;top:214.90px;font-size:15px;line-height:15px;color:#c4c4c4;">Position</div>
<div class="a t" style="left:1519px;top:214.90px;font-size:15px;line-height:15px;color:#c4c4c4;">X</div>
<div class="a" style="left:1536px;top:211.6px;width:66px;height:20.5px;background:#2a2a2a;border-radius:3px;box-shadow:inset 0 0 0 1px #232323;"></div>
<div class="a t" style="left:1540px;top:214.90px;font-size:15px;line-height:15px;color:#d2d2d2;">-200</div>
<div class="a t" style="left:1608px;top:214.90px;font-size:15px;line-height:15px;color:#c4c4c4;">Y</div>
<div class="a" style="left:1625.5px;top:211.6px;width:65.5px;height:20.5px;background:#2a2a2a;border-radius:3px;box-shadow:inset 0 0 0 1px #232323;"></div>
<div class="a t" style="left:1629.5px;top:214.90px;font-size:15px;line-height:15px;color:#d2d2d2;">0</div>
<div class="a t" style="left:1697.8px;top:214.90px;font-size:15px;line-height:15px;color:#c4c4c4;">Z</div>
<div class="a" style="left:1714.4px;top:211.6px;width:65.19999999999982px;height:20.5px;background:#2a2a2a;border-radius:3px;box-shadow:inset 0 0 0 1px #232323;"></div>
<div class="a t" style="left:1718.4px;top:214.90px;font-size:15px;line-height:15px;color:#d2d2d2;">-200</div>
<div class="a t" style="left:1364.8px;top:238.30px;font-size:15px;line-height:15px;color:#c4c4c4;">Rotation</div>
<div class="a t" style="left:1519px;top:238.30px;font-size:15px;line-height:15px;color:#c4c4c4;">X</div>
<div class="a" style="left:1536px;top:235px;width:66px;height:20.5px;background:#2a2a2a;border-radius:3px;box-shadow:inset 0 0 0 1px #232323;"></div>
<div class="a t" style="left:1540px;top:238.30px;font-size:15px;line-height:15px;color:#d2d2d2;">0</div>
<div class="a t" style="left:1608px;top:238.30px;font-size:15px;line-height:15px;color:#c4c4c4;">Y</div>
<div class="a" style="left:1625.5px;top:235px;width:65.5px;height:20.5px;background:#2a2a2a;border-radius:3px;box-shadow:inset 0 0 0 1px #232323;"></div>
<div class="a t" style="left:1629.5px;top:238.30px;font-size:15px;line-height:15px;color:#d2d2d2;">0</div>
<div class="a t" style="left:1697.8px;top:238.30px;font-size:15px;line-height:15px;color:#c4c4c4;">Z</div>
<div class="a" style="left:1714.4px;top:235px;width:65.19999999999982px;height:20.5px;background:#2a2a2a;border-radius:3px;box-shadow:inset 0 0 0 1px #232323;"></div>
<div class="a t" style="left:1718.4px;top:238.30px;font-size:15px;line-height:15px;color:#d2d2d2;">0</div>
<div class="a t" style="left:1364.8px;top:262.30px;font-size:15px;line-height:15px;color:#c4c4c4;">Scale</div>
<div class="a t" style="left:1519px;top:262.30px;font-size:15px;line-height:15px;color:#c4c4c4;">X</div>
<div class="a" style="left:1536px;top:259px;width:66px;height:20.5px;background:#2a2a2a;border-radius:3px;box-shadow:inset 0 0 0 1px #232323;"></div>
<div class="a t" style="left:1540px;top:262.30px;font-size:15px;line-height:15px;color:#d2d2d2;">1</div>
<div class="a t" style="left:1608px;top:262.30px;font-size:15px;line-height:15px;color:#c4c4c4;">Y</div>
<div class="a" style="left:1625.5px;top:259px;width:65.5px;height:20.5px;background:#2a2a2a;border-radius:3px;box-shadow:inset 0 0 0 1px #232323;"></div>
<div class="a t" style="left:1629.5px;top:262.30px;font-size:15px;line-height:15px;color:#d2d2d2;">1</div>
<div class="a t" style="left:1697.8px;top:262.30px;font-size:15px;line-height:15px;color:#c4c4c4;">Z</div>
<div class="a" style="left:1714.4px;top:259px;width:65.19999999999982px;height:20.5px;background:#2a2a2a;border-radius:3px;box-shadow:inset 0 0 0 1px #232323;"></div>
<div class="a t" style="left:1718.4px;top:262.30px;font-size:15px;line-height:15px;color:#d2d2d2;">1</div>
<svg class="a" style="left:1492px;top:261px;" width="18" height="14" viewBox="0 0 18 14"><g fill="none" stroke="#a8a8a8" stroke-width="1.4"><rect x="1.5" y="3.5" width="9" height="7" rx="3.5"/><rect x="7.5" y="3.5" width="9" height="7" rx="3.5"/></g><path d="M2 1 L16 13" stroke="#a8a8a8" stroke-width="1.4"/></svg>
<div class="a" style="left:1342px;top:290px;width:444px;height:2px;background:#1f1f1f;"></div>
<div class="a" style="left:1342px;top:292px;width:444px;height:23px;background:#3e3e3e;"></div>
<svg class="a" style="left:1350px;top:300px;" width="10" height="9" viewBox="0 0 10 9"><path d="M0.5 0.5 L9.5 0.5 L5.0 8.5 Z" fill="#707070"/></svg>
<svg class="a" style="left:1367px;top:295px;" width="17" height="18" viewBox="0 0 17 18"><circle cx="11" cy="4" r="3" fill="#f5b400"/><path d="M1 17 L1 12 C5 9 11 9 16 12 L16 17 Z" fill="#9ce54a"/><path d="M3 14 L8 11.2 M6 16.5 L12 12.5" stroke="#3e3e3e" stroke-width="1.3"/></svg>
<svg class="a" style="left:1390px;top:296px;" width="16" height="16" viewBox="0 0 16 16"><rect x="0.5" y="0.5" width="15" height="15" rx="2" fill="#2a2a2a" stroke="#212121"/><path d="M3.5 8.2 L6.6 11.2 L12.6 4.8" fill="none" stroke="#c4c4c4" stroke-width="2"/></svg>
<div class="a t" style="left:1413.2px;top:296.30px;font-size:15px;line-height:15px;color:#d4d4d4;font-weight:bold;">Terrain</div>
<svg class="a" style="left:1715px;top:296px;" width="15" height="15" viewBox="0 0 15 15"><circle cx="7.5" cy="7.5" r="6.5" fill="#c4c4c4"/><path d="M5.3 5.8 C5.3 3.4 9.8 3.4 9.8 5.8 C9.8 7.4 7.6 7.4 7.6 9.2" fill="none" stroke="#3e3e3e" stroke-width="1.7"/><circle cx="7.6" cy="11.4" r="1.05" fill="#3e3e3e"/></svg>
<svg class="a" style="left:1738px;top:296px;" width="16" height="15" viewBox="0 0 16 15"><g stroke="#c4c4c4" stroke-width="1.6"><path d="M1 5 H15 M1 10.5 H15"/><path d="M10.5 1.5 V8 M5.5 7.5 V14"/></g></svg>
<svg class="a" style="left:1768px;top:297px;" width="4" height="14" viewBox="0 0 4 14"><circle cx="2" cy="2" r="1.5" fill="#c4c4c4"/><circle cx="2" cy="7" r="1.5" fill="#c4c4c4"/><circle cx="2" cy="12" r="1.5" fill="#c4c4c4"/></svg>
<div class="a" style="left:1477.5px;top:322px;width:35px;height:23px;background:#585858;border-radius:3px 0 0 3px;box-shadow:0 1px 0 #252525;"></div>
<div class="a" style="left:1512.5px;top:322px;width:36.5px;height:23px;background:#585858;border-radius:0;box-shadow:0 1px 0 #252525;"></div>
<div class="a" style="left:1511.5px;top:322px;width:2px;height:23px;background:#2c2c2c;"></div>
<div class="a" style="left:1549.5px;top:322px;width:36.5px;height:23px;background:#585858;border-radius:0;box-shadow:0 1px 0 #252525;"></div>
<div class="a" style="left:1548.5px;top:322px;width:2px;height:23px;background:#2c2c2c;"></div>
<div class="a" style="left:1586.5px;top:322px;width:37px;height:23px;background:#585858;border-radius:0;box-shadow:0 1px 0 #252525;"></div>
<div class="a" style="left:1585.5px;top:322px;width:2px;height:23px;background:#2c2c2c;"></div>
<div class="a" style="left:1624px;top:322px;width:36px;height:23px;background:#585858;border-radius:0 3px 3px 0;box-shadow:0 1px 0 #252525;"></div>
<div class="a" style="left:1623px;top:322px;width:2px;height:23px;background:#2c2c2c;"></div>
<svg class="a" style="left:1486px;top:325px;" width="18" height="18" viewBox="0 0 18 18"><path d="M1.5 8.5 L4.5 4 L6 6 L8.8 1.5 L12.2 8.5 Z" fill="#cfcfcf"/><path d="M14.5 1 V6.5 M11.8 3.8 H17.2" stroke="#cfcfcf" stroke-width="1.6"/><path d="M2 13 L9 9.5 L16 13 L9 16.5 Z" fill="#cfcfcf"/><g fill="#585858"><circle cx="6" cy="13" r="1.2"/><circle cx="9" cy="11.5" r="1.2"/><circle cx="12" cy="13" r="1.2"/><circle cx="9" cy="14.6" r="1.2"/></g></svg>
<svg class="a" style="left:1522px;top:325px;" width="18" height="18" viewBox="0 0 18 18"><path d="M1 11 L5 4.5 L7 7 L9.8 1.5 L13.5 9.5 L11 11 Z" fill="#cfcfcf"/><path d="M16.5 7 L11.2 13.2" stroke="#cfcfcf" stroke-width="1.7"/><circle cx="10.3" cy="14.6" r="1.9" fill="#cfcfcf"/></svg>
<svg class="a" style="left:1559px;top:325px;" width="18" height="18" viewBox="0 0 18 18"><ellipse cx="6.5" cy="6" rx="4.3" ry="5.3" fill="#cfcfcf"/><rect x="5.5" y="10" width="2" height="5" fill="#cfcfcf"/><path d="M17 8 L11.7 14.2" stroke="#cfcfcf" stroke-width="1.7"/><circle cx="10.8" cy="15.6" r="1.9" fill="#cfcfcf"/></svg>
<svg class="a" style="left:1596px;top:325px;" width="18" height="18" viewBox="0 0 18 18"><g fill="none" stroke="#cfcfcf" stroke-width="1.3" stroke-linecap="round"><path d="M5 12 C5 7 6 4 7.5 2 M7.5 12 C7.5 7 9 4 10.5 2 M10 11 C10 7 11.5 4 13 2.5 M3 15 C3 12 3.5 10 4.5 9"/></g><path d="M17 8 L11.7 14.2" stroke="#cfcfcf" stroke-width="1.7"/><circle cx="10.8" cy="15.6" r="1.9" fill="#cfcfcf"/></svg>
<svg class="a" style="left:1633px;top:325px;" width="18" height="18" viewBox="0 0 18 18"><path d="M1 10 L5 4 L7 6.5 L9.8 1 L13.5 9 L10 10 Z" fill="#cfcfcf"/><circle cx="13" cy="13" r="3.3" fill="#cfcfcf"/><g stroke="#cfcfcf" stroke-width="1.8"><path d="M13 8.3 V17.7 M8.3 13 H17.7 M9.7 9.7 L16.3 16.3 M16.3 9.7 L9.7 16.3"/></g><circle cx="13" cy="13" r="1.4" fill="#585858"/></svg>
<div class="a t" style="left:1366.3px;top:351.70px;font-size:15px;line-height:15px;color:#c4c4c4;transform:scaleX(1.0133);transform-origin:0 0;">No tool selected</div>
<div class="a t" style="left:1366.3px;top:375.95px;font-size:12.7px;line-height:12.7px;color:#c4c4c4;transform:scaleX(0.9988);transform-origin:0 0;">Please select a tool</div>
<div class="a" style="left:1342px;top:401px;width:444px;height:2px;background:#1f1f1f;"></div>
<div class="a" style="left:1342px;top:403px;width:444px;height:23px;background:#3e3e3e;"></div>
<svg class="a" style="left:1350px;top:411px;" width="10" height="9" viewBox="0 0 10 9"><path d="M0.5 0.5 L9.5 0.5 L5.0 8.5 Z" fill="#707070"/></svg>
<svg class="a" style="left:1367px;top:406px;" width="17" height="18" viewBox="0 0 17 18"><path d="M8.5 1 L16 5 L16 13 L8.5 17 L1 13 L1 5 Z" fill="#8fd94e"/><path d="M8.5 3.8 L13.5 6.4 L13.5 11.6 L8.5 14.3 L3.5 11.6 L3.5 6.4 Z" fill="#2e3a22"/><path d="M3.5 6.4 L8.5 9 L13.5 6.4 M8.5 9 V14.3" stroke="#8fd94e" stroke-width="1.4" fill="none"/></svg>
<svg class="a" style="left:1390px;top:407px;" width="16" height="16" viewBox="0 0 16 16"><rect x="0.5" y="0.5" width="15" height="15" rx="2" fill="#2a2a2a" stroke="#212121"/><path d="M3.5 8.2 L6.6 11.2 L12.6 4.8" fill="none" stroke="#c4c4c4" stroke-width="2"/></svg>
<div class="a t" style="left:1413.2px;top:407.30px;font-size:15px;line-height:15px;color:#d4d4d4;font-weight:bold;">Terrain Collider</div>
<svg class="a" style="left:1715px;top:407px;" width="15" height="15" viewBox="0 0 15 15"><circle cx="7.5" cy="7.5" r="6.5" fill="#c4c4c4"/><path d="M5.3 5.8 C5.3 3.4 9.8 3.4 9.8 5.8 C9.8 7.4 7.6 7.4 7.6 9.2" fill="none" stroke="#3e3e3e" stroke-width="1.7"/><circle cx="7.6" cy="11.4" r="1.05" fill="#3e3e3e"/></svg>
<svg class="a" style="left:1738px;top:407px;" width="16" height="15" viewBox="0 0 16 15"><g stroke="#c4c4c4" stroke-width="1.6"><path d="M1 5 H15 M1 10.5 H15"/><path d="M10.5 1.5 V8 M5.5 7.5 V14"/></g></svg>
<svg class="a" style="left:1768px;top:408px;" width="4" height="14" viewBox="0 0 4 14"><circle cx="2" cy="2" r="1.5" fill="#c4c4c4"/><circle cx="2" cy="7" r="1.5" fill="#c4c4c4"/><circle cx="2" cy="12" r="1.5" fill="#c4c4c4"/></svg>
<div class="a t" style="left:1364.8px;top:435.30px;font-size:15px;line-height:15px;color:#c4c4c4;transform:scaleX(1.0105);transform-origin:0 0;">Provides Contacts</div>
<svg class="a" style="left:1518px;top:434px;" width="16" height="16" viewBox="0 0 16 16"><rect x="0.5" y="0.5" width="15" height="15" rx="2" fill="#2a2a2a" stroke="#212121"/></svg>
<div class="a t" style="left:1364.8px;top:458.80px;font-size:15px;line-height:15px;color:#c4c4c4;transform:scaleX(1.1621);transform-origin:0 0;">Material</div>
<div class="a" style="left:1518px;top:455px;width:262px;height:20px;background:#2a2a2a;border-radius:3px;box-shadow:inset 0 0 0 1px #232323;"></div>
<div class="a" style="left:1758px;top:456px;width:21px;height:18px;background:#303030;border-radius:0 2px 2px 0;"></div>
<svg class="a" style="left:1761px;top:457px;" width="16" height="16" viewBox="0 0 16 16"><g opacity="1"><circle cx="8" cy="8" r="5.6" fill="none" stroke="#c4c4c4" stroke-width="1.3"/><circle cx="8" cy="8" r="2.2" fill="#c4c4c4"/></g></svg>
<div class="a t" style="left:1522px;top:458.80px;font-size:15px;line-height:15px;color:#d2d2d2;transform:scaleX(1.0084);transform-origin:0 0;">None (Physic Material)</div>
<div class="a t" style="left:1364.8px;top:482.30px;font-size:15px;line-height:15px;color:#c4c4c4;transform:scaleX(1.0036);transform-origin:0 0;">Terrain Data</div>
<div class="a" style="left:1518px;top:479px;width:262px;height:20px;background:#2a2a2a;border-radius:3px;box-shadow:inset 0 0 0 1px #232323;"></div>
<div class="a" style="left:1758px;top:480px;width:21px;height:18px;background:#303030;border-radius:0 2px 2px 0;"></div>
<svg class="a" style="left:1761px;top:481px;" width="16" height="16" viewBox="0 0 16 16"><g opacity="1"><circle cx="8" cy="8" r="5.6" fill="none" stroke="#c4c4c4" stroke-width="1.3"/><circle cx="8" cy="8" r="2.2" fill="#c4c4c4"/></g></svg>
<svg class="a" style="left:1522px;top:482px;" width="13" height="15" viewBox="0 0 13 15"><path d="M1 1 H8 L12 5 V14 H1 Z" fill="#e8e8e8"/><path d="M2.5 10 C5 8 9 8 11 9.5 V13 H2.5Z" fill="#74c23c"/><path d="M3.5 12 L9 9.5" stroke="#2a2a2a" stroke-width="0.9"/></svg>
<div class="a t" style="left:1537px;top:482.30px;font-size:15px;line-height:15px;color:#d2d2d2;transform:scaleX(1.0250);transform-origin:0 0;">Terrain</div>
<div class="a t" style="left:1364.8px;top:505.80px;font-size:15px;line-height:15px;color:#c4c4c4;transform:scaleX(1.0041);transform-origin:0 0;">Enable Tree Colliders</div>
<svg class="a" style="left:1518px;top:504px;" width="16" height="16" viewBox="0 0 16 16"><rect x="0.5" y="0.5" width="15" height="15" rx="2" fill="#2a2a2a" stroke="#212121"/><path d="M3.5 8.2 L6.6 11.2 L12.6 4.8" fill="none" stroke="#c4c4c4" stroke-width="2"/></svg>
<svg class="a" style="left:1351px;top:531px;" width="9" height="10" viewBox="0 0 9 10"><path d="M0.5 0.5 L8.5 5.0 L0.5 9.5 Z" fill="#707070"/></svg>
<div class="a t" style="left:1364.8px;top:528.80px;font-size:15px;line-height:15px;color:#c4c4c4;transform:scaleX(1.0027);transform-origin:0 0;">Layer Overrides</div>
<div class="a" style="left:1342px;top:554px;width:444px;height:2px;background:#1f1f1f;"></div>
<div class="a" style="left:1342px;top:556px;width:444px;height:23px;background:#3e3e3e;"></div>
<svg class="a" style="left:1350px;top:564px;" width="10" height="9" viewBox="0 0 10 9"><path d="M0.5 0.5 L9.5 0.5 L5.0 8.5 Z" fill="#707070"/></svg>
<svg class="a" style="left:1367px;top:559px;" width="16" height="18" viewBox="0 0 16 18"><path d="M1 1 H11 L15 5 V17 H1 Z" fill="#e8e8e8"/><text x="8" y="14" font-size="11" text-anchor="middle" fill="#3aa142" font-family="Liberation Sans" font-weight="bold">#</text></svg>
<svg class="a" style="left:1390px;top:560px;" width="16" height="16" viewBox="0 0 16 16"><rect x="0.5" y="0.5" width="15" height="15" rx="2" fill="#2a2a2a" stroke="#212121"/><path d="M3.5 8.2 L6.6 11.2 L12.6 4.8" fill="none" stroke="#c4c4c4" stroke-width="2"/></svg>
<div class="a t" style="left:1413.2px;top:560.30px;font-size:15px;line-height:15px;color:#d4d4d4;font-weight:bold;">Teleportation Area</div>
<svg class="a" style="left:1715px;top:560px;" width="15" height="15" viewBox="0 0 15 15"><circle cx="7.5" cy="7.5" r="6.5" fill="#c4c4c4"/><path d="M5.3 5.8 C5.3 3.4 9.8 3.4 9.8 5.8 C9.8 7.4 7.6 7.4 7.6 9.2" fill="none" stroke="#3e3e3e" stroke-width="1.7"/><circle cx="7.6" cy="11.4" r="1.05" fill="#3e3e3e"/></svg>
<svg class="a" style="left:1738px;top:560px;" width="16" height="15" viewBox="0 0 16 15"><g stroke="#c4c4c4" stroke-width="1.6"><path d="M1 5 H15 M1 10.5 H15"/><path d="M10.5 1.5 V8 M5.5 7.5 V14"/></g></svg>
<svg class="a" style="left:1768px;top:561px;" width="4" height="14" viewBox="0 0 4 14"><circle cx="2" cy="2" r="1.5" fill="#c4c4c4"/><circle cx="2" cy="7" r="1.5" fill="#c4c4c4"/><circle cx="2" cy="12" r="1.5" fill="#c4c4c4"/></svg>
<div class="a t" style="left:1364.8px;top:588.80px;font-size:15px;line-height:15px;color:#8a8a8a;transform:scaleX(1.0171);transform-origin:0 0;">Script</div>
<div class="a" style="left:1519px;top:586px;width:261px;height:20px;background:#2f2f2f;border-radius:3px;box-shadow:inset 0 0 0 1px #2a2a2a;"></div>
<svg class="a" style="left:1761px;top:588px;" width="16" height="16" viewBox="0 0 16 16"><g opacity="0.45"><circle cx="8" cy="8" r="5.6" fill="none" stroke="#c4c4c4" stroke-width="1.3"/><circle cx="8" cy="8" r="2.2" fill="#c4c4c4"/></g></svg>
<svg class="a" style="left:1522px;top:588px;" width="13" height="16" viewBox="0 0 13 16"><g opacity="0.55"><path d="M1 1 H8 L12 5 V14 H1 Z" fill="#e8e8e8"/><text x="6.5" y="12" font-size="9" text-anchor="middle" fill="#3aa142" font-family="Liberation Sans" font-weight="bold">#</text></g></svg>
<div class="a t" style="left:1537px;top:588.80px;font-size:15px;line-height:15px;color:#8a8a8a;transform:scaleX(1.0206);transform-origin:0 0;">TeleportationArea</div>
<div class="a t" style="left:1364.8px;top:612.80px;font-size:15px;line-height:15px;color:#c4c4c4;transform:scaleX(1.0171);transform-origin:0 0;">Interaction Manager</div>
<div class="a" style="left:1519px;top:609.5px;width:261px;height:20px;background:#2a2a2a;border-radius:3px;box-shadow:inset 0 0 0 1px #232323;"></div>
<div class="a" style="left:1758px;top:610.5px;width:21px;height:18px;background:#303030;border-radius:0 2px 2px 0;"></div>
<svg class="a" style="left:1761px;top:611.5px;" width="16" height="16" viewBox="0 0 16 16"><g opacity="1"><circle cx="8" cy="8" r="5.6" fill="none" stroke="#c4c4c4" stroke-width="1.3"/><circle cx="8" cy="8" r="2.2" fill="#c4c4c4"/></g></svg>
<div class="a t" style="left:1522px;top:612.80px;font-size:15px;line-height:15px;color:#d2d2d2;transform:scaleX(0.9883);transform-origin:0 0;">None (XR Interaction Manager)</div>
<div class="a t" style="left:1364.8px;top:636.30px;font-size:15px;line-height:15px;color:#c4c4c4;width:150px;overflow:hidden;">Interaction Layer Mask</div>
<div class="a" style="left:1519.5px;top:634px;width:259.5px;height:19px;background:#4f4f4f;border-radius:3px;box-shadow:inset 0 0 0 1px #303030, 0 1px 0 #2a2a2a;"></div>
<svg class="a" style="left:1762px;top:641px;" width="10" height="7" viewBox="0 0 10 7"><path d="M0.5 0.5 L9.5 0.5 L5 6.5 Z" fill="#c4c4c4"/></svg>
<div class="a t" style="left:1523px;top:636.30px;font-size:15px;line-height:15px;color:#d2d2d2;transform:scaleX(1.0099);transform-origin:0 0;">Default</div>
<svg class="a" style="left:1351px;top:661px;" width="9" height="10" viewBox="0 0 9 10"><path d="M0.5 0.5 L8.5 5.0 L0.5 9.5 Z" fill="#707070"/></svg>
<div class="a t" style="left:1366px;top:659.30px;font-size:15px;line-height:15px;color:#d4d4d4;font-weight:bold;transform:scaleX(0.9660);transform-origin:0 0;">Colliders</div>
<div class="a" style="left:1724px;top:656px;width:55px;height:20px;background:#2a2a2a;border-radius:3px;box-shadow:inset 0 0 0 1px #232323;"></div>
<div class="a t" style="left:1728px;top:659.30px;font-size:15px;line-height:15px;color:#d2d2d2;">0</div>
<div class="a t" style="left:1364.8px;top:682.80px;font-size:15px;line-height:15px;color:#c4c4c4;width:151px;overflow:hidden;">Distance Calculation Mode</div>
<div class="a" style="left:1519.5px;top:681px;width:259.5px;height:19px;background:#4f4f4f;border-radius:3px;box-shadow:inset 0 0 0 1px #303030, 0 1px 0 #2a2a2a;"></div>
<svg class="a" style="left:1762px;top:688px;" width="10" height="7" viewBox="0 0 10 7"><path d="M0.5 0.5 L9.5 0.5 L5 6.5 Z" fill="#c4c4c4"/></svg>
<div class="a t" style="left:1523px;top:682.80px;font-size:15px;line-height:15px;color:#d2d2d2;transform:scaleX(1.0056);transform-origin:0 0;">Collider Position</div>
<div class="a t" style="left:1364.8px;top:706.30px;font-size:15px;line-height:15px;color:#c4c4c4;transform:scaleX(0.9931);transform-origin:0 0;">Custom Reticle</div>
<div class="a" style="left:1519px;top:703.5px;width:261px;height:20px;background:#2a2a2a;border-radius:3px;box-shadow:inset 0 0 0 1px #232323;"></div>
<div class="a" style="left:1758px;top:704.5px;width:21px;height:18px;background:#303030;border-radius:0 2px 2px 0;"></div>
<svg class="a" style="left:1761px;top:705.5px;" width="16" height="16" viewBox="0 0 16 16"><g opacity="1"><circle cx="8" cy="8" r="5.6" fill="none" stroke="#c4c4c4" stroke-width="1.3"/><circle cx="8" cy="8" r="2.2" fill="#c4c4c4"/></g></svg>
<div class="a t" style="left:1522px;top:706.30px;font-size:15px;line-height:15px;color:#d2d2d2;transform:scaleX(0.9972);transform-origin:0 0;">None (Game Object)</div>
<div class="a t" style="left:1364.8px;top:729.80px;font-size:15px;line-height:15px;color:#c4c4c4;transform:scaleX(1.0134);transform-origin:0 0;">Select Mode</div>
<div class="a" style="left:1519.5px;top:728px;width:259.5px;height:19px;background:#4f4f4f;border-radius:3px;box-shadow:inset 0 0 0 1px #303030, 0 1px 0 #2a2a2a;"></div>
<svg class="a" style="left:1762px;top:735px;" width="10" height="7" viewBox="0 0 10 7"><path d="M0.5 0.5 L9.5 0.5 L5 6.5 Z" fill="#c4c4c4"/></svg>
<div class="a t" style="left:1523px;top:729.80px;font-size:15px;line-height:15px;color:#d2d2d2;transform:scaleX(1.0447);transform-origin:0 0;">Multiple</div>
<div class="a t" style="left:1364.8px;top:753.30px;font-size:15px;line-height:15px;color:#c4c4c4;transform:scaleX(0.9935);transform-origin:0 0;">Focus Mode</div>
<div class="a" style="left:1519.5px;top:751px;width:259.5px;height:19px;background:#4f4f4f;border-radius:3px;box-shadow:inset 0 0 0 1px #303030, 0 1px 0 #2a2a2a;"></div>
<svg class="a" style="left:1762px;top:758px;" width="10" height="7" viewBox="0 0 10 7"><path d="M0.5 0.5 L9.5 0.5 L5 6.5 Z" fill="#c4c4c4"/></svg>
<div class="a t" style="left:1523px;top:753.30px;font-size:15px;line-height:15px;color:#d2d2d2;transform:scaleX(0.9832);transform-origin:0 0;">Single</div>
<svg class="a" style="left:1351px;top:779px;" width="9" height="10" viewBox="0 0 9 10"><path d="M0.5 0.5 L8.5 5.0 L0.5 9.5 Z" fill="#707070"/></svg>
<div class="a t" style="left:1364.8px;top:776.80px;font-size:15px;line-height:15px;color:#c4c4c4;transform:scaleX(0.9981);transform-origin:0 0;">Gaze Configuration</div>
<svg class="a" style="left:1350px;top:808px;" width="10" height="9" viewBox="0 0 10 9"><path d="M0.5 0.5 L9.5 0.5 L5.0 8.5 Z" fill="#707070"/></svg>
<div class="a t" style="left:1365px;top:804.30px;font-size:15px;line-height:15px;color:#c4c4c4;transform:scaleX(1.0319);transform-origin:0 0;">Teleportation Configuration</div>
<div class="a t" style="left:1382.7px;top:827.80px;font-size:15px;line-height:15px;color:#c4c4c4;transform:scaleX(1.0178);transform-origin:0 0;">Match Orientation</div>
<div class="a" style="left:1519.5px;top:826px;width:259.5px;height:19px;background:#4f4f4f;border-radius:3px;box-shadow:inset 0 0 0 1px #303030, 0 1px 0 #2a2a2a;"></div>
<svg class="a" style="left:1762px;top:833px;" width="10" height="7" viewBox="0 0 10 7"><path d="M0.5 0.5 L9.5 0.5 L5 6.5 Z" fill="#c4c4c4"/></svg>
<div class="a t" style="left:1523px;top:827.80px;font-size:15px;line-height:15px;color:#d2d2d2;transform:scaleX(0.9913);transform-origin:0 0;">World Space Up</div>
<div class="a t" style="left:1400px;top:851.30px;font-size:15px;line-height:15px;color:#c4c4c4;width:116px;overflow:hidden;">Match Directional Input</div>
<svg class="a" style="left:1519px;top:850px;" width="16" height="16" viewBox="0 0 16 16"><rect x="0.5" y="0.5" width="15" height="15" rx="2" fill="#2a2a2a" stroke="#212121"/></svg>
<div class="a t" style="left:1382.7px;top:874.80px;font-size:15px;line-height:15px;color:#c4c4c4;transform:scaleX(1.0267);transform-origin:0 0;">Teleport Trigger</div>
<div class="a" style="left:1519.5px;top:873px;width:259.5px;height:19px;background:#4f4f4f;border-radius:3px;box-shadow:inset 0 0 0 1px #303030, 0 1px 0 #2a2a2a;"></div>
<svg class="a" style="left:1762px;top:880px;" width="10" height="7" viewBox="0 0 10 7"><path d="M0.5 0.5 L9.5 0.5 L5 6.5 Z" fill="#c4c4c4"/></svg>
<div class="a t" style="left:1523px;top:874.80px;font-size:15px;line-height:15px;color:#d2d2d2;transform:scaleX(0.9846);transform-origin:0 0;">On Select Exited</div>
<div class="a t" style="left:1382.7px;top:898.30px;font-size:15px;line-height:15px;color:#c4c4c4;width:134px;overflow:hidden;">Teleportation Provider</div>
<div class="a" style="left:1518px;top:896.5px;width:262px;height:20px;background:#2a2a2a;border-radius:3px;box-shadow:inset 0 0 0 1px #232323;"></div>
<div class="a" style="left:1758px;top:897.5px;width:21px;height:18px;background:#303030;border-radius:0 2px 2px 0;"></div>
<svg class="a" style="left:1761px;top:898.5px;" width="16" height="16" viewBox="0 0 16 16"><g opacity="1"><circle cx="8" cy="8" r="5.6" fill="none" stroke="#c4c4c4" stroke-width="1.3"/><circle cx="8" cy="8" r="2.2" fill="#c4c4c4"/></g></svg>
<div class="a t" style="left:1521.5px;top:898.30px;font-size:15px;line-height:15px;color:#d2d2d2;transform:scaleX(1.0156);transform-origin:0 0;">None (Teleportation Provider)</div>
<div class="a t" style="left:1382.7px;top:921.80px;font-size:15px;line-height:15px;color:#c4c4c4;width:134px;overflow:hidden;">Filter Selection By Hover Mode</div>
<svg class="a" style="left:1519px;top:920.5px;" width="16" height="16" viewBox="0 0 16 16"><rect x="0.5" y="0.5" width="15" height="15" rx="2" fill="#2a2a2a" stroke="#212121"/></svg>
<svg class="a" style="left:1351px;top:954px;" width="9" height="10" viewBox="0 0 9 10"><path d="M0.5 0.5 L8.5 5.0 L0.5 9.5 Z" fill="#707070"/></svg>
<div class="a t" style="left:1364.8px;top:951.80px;font-size:15px;line-height:15px;color:#c4c4c4;transform:scaleX(1.0131);transform-origin:0 0;">Interactable Filters</div>
<svg class="a" style="left:1351px;top:982px;" width="9" height="10" viewBox="0 0 9 10"><path d="M0.5 0.5 L8.5 5.0 L0.5 9.5 Z" fill="#707070"/></svg>
<div class="a t" style="left:1364.8px;top:979.80px;font-size:15px;line-height:15px;color:#c4c4c4;transform:scaleX(1.0124);transform-origin:0 0;">Interactable Events</div>
<div class="a" style="left:1342px;top:1005px;width:444px;height:2px;background:#232323;"></div>
<div class="a" style="left:1342px;top:1007px;width:444px;height:45px;background:#383838;"></div>
<div class="a" style="left:1430.5px;top:1018px;width:267.5px;height:25px;background:#585858;border-radius:3px;box-shadow:0 1px 0 #262626, inset 0 0 0 1px #303030;"></div>
<div class="a t" style="left:1264px;width:600px;text-align:center;top:1022.80px;font-size:15px;line-height:15px;color:#d6d6d6;">Add Component</div>
<div class="a" style="left:0px;top:745px;width:1340px;height:23px;background:#282828;"></div>
<div class="a" style="left:0px;top:745px;width:94px;height:23px;background:#3c3c3c;border-radius:3px 3px 0 0;"></div>
<svg class="a" style="left:8px;top:750px;" width="16" height="14" viewBox="0 0 16 14"><path d="M1 2 H6 L7.5 3.8 H15 V13 H1 Z" fill="#c4c4c4"/><rect x="1" y="5" width="14" height="8" fill="#c4c4c4"/></svg>
<div class="a t" style="left:27px;top:749.30px;font-size:15px;line-height:15px;color:#c4c4c4;transform:scaleX(1.0239);transform-origin:0 0;">Project</div>
<svg class="a" style="left:105px;top:749px;" width="13" height="15" viewBox="0 0 13 15"><rect x="1" y="1" width="11" height="13" rx="1" fill="#c4c4c4"/><path d="M3 4.5 H10 M3 7.5 H10 M3 10.5 H10" stroke="#282828" stroke-width="1.1"/></svg>
<div class="a t" style="left:124px;top:749.30px;font-size:15px;line-height:15px;color:#c4c4c4;transform:scaleX(0.9812);transform-origin:0 0;">Console</div>
<svg class="a" style="left:209px;top:747px;" width="23" height="21" viewBox="0 0 23 21"><g fill="none" stroke="#6fc6f5" stroke-width="1.5" stroke-linejoin="round"><path d="M9 1.5 L16.5 5.5 L16.5 13.5 L9 17.5 L1.5 13.5 L1.5 5.5 Z"/><path d="M1.5 5.5 L9 9.5 L16.5 5.5 M9 9.5 V17.5"/></g><text x="16.5" y="19.5" font-size="10" text-anchor="middle" fill="#f0602a" font-family="Liberation Sans" font-weight="bold">{}</text></svg>
<div class="a t" style="left:233px;top:749.30px;font-size:15px;line-height:15px;color:#c4c4c4;transform:scaleX(0.9972);transform-origin:0 0;">XRI Default Input Actions</div>
<svg class="a" style="left:420px;top:747px;" width="17" height="18" viewBox="0 0 17 18"><path d="M8.5 0.8 L16 4.8 L16 13.2 L8.5 17.2 L1 13.2 L1 4.8 Z" fill="#71c9f7"/><path d="M1 4.8 L8.5 8.8 L16 4.8 M8.5 8.8 L8.5 17.2" fill="none" stroke="#1f3a4e" stroke-width="1.1"/></svg>
<div class="a t" style="left:443.8px;top:749.30px;font-size:15px;line-height:15px;color:#c4c4c4;transform:scaleX(0.9511);transform-origin:0 0;">XR Origin MP</div>
<svg class="a" style="left:1298px;top:749px;" width="12" height="14" viewBox="0 0 12 14"><path d="M3.2 4.8 V4.2 A2.9 2.9 0 0 1 9 4.2 V7" fill="none" stroke="#c4c4c4" stroke-width="1.4"/><rect x="1.2" y="7" width="9.6" height="6" rx="0.8" fill="none" stroke="#c4c4c4" stroke-width="1.4"/></svg>
<svg class="a" style="left:1322px;top:749px;" width="4" height="14" viewBox="0 0 4 14"><circle cx="2" cy="2" r="1.5" fill="#c4c4c4"/><circle cx="2" cy="7" r="1.5" fill="#c4c4c4"/><circle cx="2" cy="12" r="1.5" fill="#c4c4c4"/></svg>
<div class="a" style="left:0px;top:768px;width:1340px;height:24px;background:#3c3c3c;"></div>
<div class="a" style="left:0px;top:791px;width:1340px;height:1px;background:#232323;"></div>
<svg class="a" style="left:7px;top:771px;" width="16" height="16" viewBox="0 0 16 16"><path d="M8 1.5 V14.5 M1.5 8 H14.5" stroke="#c4c4c4" stroke-width="2"/></svg>
<svg class="a" style="left:27px;top:776px;" width="9" height="6" viewBox="0 0 9 6"><path d="M0.5 0.5 L8.5 0.5 L4.5 5.5 Z" fill="#c4c4c4"/></svg>
<div class="a" style="left:793px;top:769.5px;width:371px;height:19.5px;background:#2a2a2a;border-radius:4px;box-shadow:inset 0 0 0 1px #212121;"></div>
<svg class="a" style="left:797px;top:773px;" width="12" height="12" viewBox="0 0 12 12"><circle cx="4.5" cy="4.5" r="2.8" fill="none" stroke="#c4c4c4" stroke-width="1.5"/><path d="M6.5 6.5 L9.5 9.5" stroke="#c4c4c4" stroke-width="1.8"/></svg>
<div class="a" style="left:1145px;top:770.5px;width:18px;height:17.5px;background:#383838;border-radius:0 3px 3px 0;"></div>
<svg class="a" style="left:1146px;top:771px;" width="17" height="17" viewBox="0 0 17 17"><rect x="6" y="2.5" width="9" height="9" fill="none" stroke="#b0b0b0" stroke-width="1.2"/><rect x="2" y="10" width="4.5" height="4.5" fill="#2a2a2a" stroke="#b0b0b0" stroke-width="1.2"/><path d="M7 10 L12.5 4.5 M9 4.5 H12.5 V8" fill="none" stroke="#b0b0b0" stroke-width="1.2"/></svg>
<div class="a" style="left:1168px;top:768px;width:1px;height:23px;background:#2c2c2c;"></div>
<div class="a" style="left:1198px;top:768px;width:1px;height:23px;background:#2c2c2c;"></div>
<div class="a" style="left:1228px;top:768px;width:1px;height:23px;background:#2c2c2c;"></div>
<div class="a" style="left:1258px;top:768px;width:1px;height:23px;background:#2c2c2c;"></div>
<div class="a" style="left:1290px;top:768px;width:1px;height:23px;background:#2c2c2c;"></div>
<svg class="a" style="left:1173px;top:771px;" width="18" height="18" viewBox="0 0 18 18"><rect x="3" y="2" width="6" height="6" fill="#c4c4c4"/><circle cx="6" cy="12.5" r="3.5" fill="#c4c4c4"/><path d="M12 4 L16 12 H8 Z" fill="#c4c4c4"/></svg>
<svg class="a" style="left:1203px;top:772px;" width="18" height="16" viewBox="0 0 18 16"><path d="M9 2 H15 V8 L8 15 L2 9 Z" fill="#c4c4c4"/><circle cx="12" cy="5" r="1.3" fill="#3c3c3c"/></svg>
<svg class="a" style="left:1234px;top:771px;" width="18" height="18" viewBox="0 0 18 18"><circle cx="9" cy="9" r="7.5" fill="#c4c4c4"/><rect x="7.8" y="4" width="2.4" height="6.5" fill="#3c3c3c"/><circle cx="9" cy="13" r="1.3" fill="#3c3c3c"/></svg>
<svg class="a" style="left:1265px;top:771px;" width="17" height="17" viewBox="0 0 17 17"><path d="M8.5 1 L10.7 6 L16 6.4 L12 9.9 L13.3 15.2 L8.5 12.3 L3.7 15.2 L5 9.9 L1 6.4 L6.3 6 Z" fill="#9a9a9a"/></svg>
<svg class="a" style="left:1296px;top:771px;" width="22" height="16" viewBox="0 0 22 16"><path d="M2 8 C6 2 14 2 18 8 C14 14 6 14 2 8Z" fill="none" stroke="#c4c4c4" stroke-width="1.4"/><circle cx="10" cy="8" r="2.4" fill="none" stroke="#c4c4c4" stroke-width="1.3"/><path d="M3 15 L16 1" stroke="#c4c4c4" stroke-width="1.6"/></svg>
<div class="a t" style="left:1317px;top:771.30px;font-size:15px;line-height:15px;color:#c4c4c4;transform:scaleX(1.0189);transform-origin:0 0;">60</div>
<div class="a" style="left:0px;top:792px;width:346px;height:260px;background:#383838;"></div>
<div class="a" style="left:346px;top:792px;width:13px;height:260px;background:#323232;"></div>
<svg class="a" style="left:347px;top:797px;" width="11" height="8" viewBox="0 0 11 8"><path d="M0.5 7 L10.5 7 L5.5 1 Z" fill="#c4c4c4"/></svg>
<div class="a" style="left:347px;top:811px;width:11px;height:53px;background:#5e5e5e;border-radius:5px;"></div>
<svg class="a" style="left:347px;top:1039px;" width="11" height="8" viewBox="0 0 11 8"><path d="M0.5 1 L10.5 1 L5.5 7 Z" fill="#c4c4c4"/></svg>
<div class="a" style="left:359px;top:792px;width:2px;height:260px;background:#2a2a2a;"></div>
<svg class="a" style="left:5px;top:797px;" width="10" height="9" viewBox="0 0 10 9"><path d="M0.5 0.5 L9.5 0.5 L5.0 8.5 Z" fill="#707070"/></svg>
<svg class="a" style="left:21px;top:793px;" width="15" height="15" viewBox="0 0 15 15"><path d="M7.5 1 L9.4 5.6 L14.4 6 L10.6 9.2 L11.8 14 L7.5 11.4 L3.2 14 L4.4 9.2 L0.6 6 L5.6 5.6 Z" fill="#c4c4c4"/></svg>
<div class="a t" style="left:40.7px;top:792.30px;font-size:15px;line-height:15px;color:#d4d4d4;font-weight:bold;transform:scaleX(0.9791);transform-origin:0 0;">Favorites</div>
<svg class="a" style="left:36px;top:811px;" width="17" height="16" viewBox="0 0 17 16"><circle cx="6.5" cy="6.5" r="4.6" fill="none" stroke="#c4c4c4" stroke-width="1.4"/><path d="M10 10 L14.5 14.5" stroke="#c4c4c4" stroke-width="1.8"/></svg>
<div class="a t" style="left:56.6px;top:811.30px;font-size:15px;line-height:15px;color:#c4c4c4;transform:scaleX(1.0136);transform-origin:0 0;">All Materials</div>
<svg class="a" style="left:36px;top:829px;" width="17" height="16" viewBox="0 0 17 16"><circle cx="6.5" cy="6.5" r="4.6" fill="none" stroke="#c4c4c4" stroke-width="1.4"/><path d="M10 10 L14.5 14.5" stroke="#c4c4c4" stroke-width="1.8"/></svg>
<div class="a t" style="left:56.6px;top:830.02px;font-size:15px;line-height:15px;color:#c4c4c4;transform:scaleX(1.0001);transform-origin:0 0;">All Models</div>
<svg class="a" style="left:36px;top:848px;" width="17" height="16" viewBox="0 0 17 16"><circle cx="6.5" cy="6.5" r="4.6" fill="none" stroke="#c4c4c4" stroke-width="1.4"/><path d="M10 10 L14.5 14.5" stroke="#c4c4c4" stroke-width="1.8"/></svg>
<div class="a t" style="left:56.6px;top:848.74px;font-size:15px;line-height:15px;color:#c4c4c4;transform:scaleX(0.9844);transform-origin:0 0;">All Prefabs</div>
<div class="a" style="left:0px;top:884px;width:345px;height:19px;background:#474747;"></div>
<svg class="a" style="left:5px;top:889px;" width="10" height="9" viewBox="0 0 10 9"><path d="M0.5 0.5 L9.5 0.5 L5.0 8.5 Z" fill="#707070"/></svg>
<svg class="a" style="left:20px;top:886px;" width="18" height="15" viewBox="0 0 18 15"><path d="M1 1.5 H6 L7.5 3.3 H14 V6 H4 L1 13 Z" fill="#c4c4c4"/><path d="M4.5 7 H17 L14 13.5 H1.5 Z" fill="#c4c4c4"/></svg>
<div class="a t" style="left:40.7px;top:885.30px;font-size:15px;line-height:15px;color:#d4d4d4;font-weight:bold;transform:scaleX(1.0021);transform-origin:0 0;">Assets</div>
<svg class="a" style="left:22px;top:905px;" width="9" height="10" viewBox="0 0 9 10"><path d="M0.5 0.5 L8.5 5.0 L0.5 9.5 Z" fill="#707070"/></svg>
<svg class="a" style="left:37px;top:905px;" width="16" height="14" viewBox="0 0 16 14"><path d="M1 2 H6 L7.5 3.8 H15 V13 H1 Z" fill="#c4c4c4"/><rect x="1" y="5" width="14" height="8" fill="#c4c4c4"/></svg>
<div class="a t" style="left:56.6px;top:904.30px;font-size:15px;line-height:15px;color:#c4c4c4;transform:scaleX(0.9599);transform-origin:0 0;">Art</div>
<svg class="a" style="left:22px;top:924px;" width="9" height="10" viewBox="0 0 9 10"><path d="M0.5 0.5 L8.5 5.0 L0.5 9.5 Z" fill="#707070"/></svg>
<svg class="a" style="left:37px;top:924px;" width="16" height="14" viewBox="0 0 16 14"><path d="M1 2 H6 L7.5 3.8 H15 V13 H1 Z" fill="#c4c4c4"/><rect x="1" y="5" width="14" height="8" fill="#c4c4c4"/></svg>
<div class="a t" style="left:56.6px;top:923.02px;font-size:15px;line-height:15px;color:#c4c4c4;transform:scaleX(0.9799);transform-origin:0 0;">Editor</div>
<svg class="a" style="left:22px;top:942px;" width="9" height="10" viewBox="0 0 9 10"><path d="M0.5 0.5 L8.5 5.0 L0.5 9.5 Z" fill="#707070"/></svg>
<svg class="a" style="left:37px;top:942px;" width="16" height="14" viewBox="0 0 16 14"><path d="M1 2 H6 L7.5 3.8 H15 V13 H1 Z" fill="#c4c4c4"/><rect x="1" y="5" width="14" height="8" fill="#c4c4c4"/></svg>
<div class="a t" style="left:56.6px;top:941.74px;font-size:15px;line-height:15px;color:#c4c4c4;transform:scaleX(1.0234);transform-origin:0 0;">IFC-Modelle</div>
<svg class="a" style="left:37px;top:961px;" width="16" height="14" viewBox="0 0 16 14"><path d="M1 2 H6 L7.5 3.8 H15 V13 H1 Z" fill="#c4c4c4"/><rect x="1" y="5" width="14" height="8" fill="#c4c4c4"/></svg>
<div class="a t" style="left:56.6px;top:960.46px;font-size:15px;line-height:15px;color:#c4c4c4;transform:scaleX(1.0133);transform-origin:0 0;">Models</div>
<svg class="a" style="left:22px;top:980px;" width="9" height="10" viewBox="0 0 9 10"><path d="M0.5 0.5 L8.5 5.0 L0.5 9.5 Z" fill="#707070"/></svg>
<svg class="a" style="left:37px;top:980px;" width="16" height="14" viewBox="0 0 16 14"><path d="M1 2 H6 L7.5 3.8 H15 V13 H1 Z" fill="#c4c4c4"/><rect x="1" y="5" width="14" height="8" fill="#c4c4c4"/></svg>
<div class="a t" style="left:56.6px;top:979.18px;font-size:15px;line-height:15px;color:#c4c4c4;transform:scaleX(0.9960);transform-origin:0 0;">Plugins</div>
<svg class="a" style="left:22px;top:999px;" width="9" height="10" viewBox="0 0 9 10"><path d="M0.5 0.5 L8.5 5.0 L0.5 9.5 Z" fill="#707070"/></svg>
<svg class="a" style="left:37px;top:999px;" width="16" height="14" viewBox="0 0 16 14"><path d="M1 2 H6 L7.5 3.8 H15 V13 H1 Z" fill="#c4c4c4"/><rect x="1" y="5" width="14" height="8" fill="#c4c4c4"/></svg>
<div class="a t" style="left:56.6px;top:997.90px;font-size:15px;line-height:15px;color:#c4c4c4;transform:scaleX(0.9827);transform-origin:0 0;">Prefabs</div>
<svg class="a" style="left:37px;top:1017px;" width="16" height="14" viewBox="0 0 16 14"><path d="M1 2 H6 L7.5 3.8 H15 V13 H1 Z" fill="#c4c4c4"/><rect x="1" y="5" width="14" height="8" fill="#c4c4c4"/></svg>
<div class="a t" style="left:56.6px;top:1016.62px;font-size:15px;line-height:15px;color:#c4c4c4;transform:scaleX(0.9735);transform-origin:0 0;">Resources</div>
<svg class="a" style="left:22px;top:1036px;" width="9" height="10" viewBox="0 0 9 10"><path d="M0.5 0.5 L8.5 5.0 L0.5 9.5 Z" fill="#707070"/></svg>
<svg class="a" style="left:37px;top:1036px;" width="16" height="14" viewBox="0 0 16 14"><path d="M1 2 H6 L7.5 3.8 H15 V13 H1 Z" fill="#c4c4c4"/><rect x="1" y="5" width="14" height="8" fill="#c4c4c4"/></svg>
<div class="a t" style="left:56.6px;top:1035.34px;font-size:15px;line-height:15px;color:#c4c4c4;transform:scaleX(0.9698);transform-origin:0 0;">Samples</div>
<div class="a" style="left:361px;top:792px;width:979px;height:25px;background:#3e3e3e;"></div>
<div class="a t" style="left:366px;top:796.30px;font-size:15px;line-height:15px;color:#d4d4d4;font-weight:bold;transform:scaleX(1.0021);transform-origin:0 0;">Assets</div>
<div class="a" style="left:361px;top:817px;width:979px;height:210px;background:#333333;"></div>
<div class="a" style="left:1325px;top:817px;width:15px;height:210px;background:#2f2f2f;"></div>
<svg class="a" style="left:1327px;top:822px;" width="11" height="8" viewBox="0 0 11 8"><path d="M0.5 7 L10.5 7 L5.5 1 Z" fill="#c4c4c4"/></svg>
<div class="a" style="left:1327px;top:836.5px;width:11px;height:105px;background:#5e5e5e;border-radius:5px;"></div>
<svg class="a" style="left:1327px;top:1014px;" width="11" height="8" viewBox="0 0 11 8"><path d="M0.5 1 L10.5 1 L5.5 7 Z" fill="#c4c4c4"/></svg>
<svg class="a" style="left:381px;top:820px;" width="16" height="14" viewBox="0 0 16 14"><path d="M1 2 H6 L7.5 3.8 H15 V13 H1 Z" fill="#c4c4c4"/><rect x="1" y="5" width="14" height="8" fill="#c4c4c4"/></svg>
<div class="a t" style="left:401px;top:819.30px;font-size:15px;line-height:15px;color:#c4c4c4;transform:scaleX(0.9912);transform-origin:0 0;">Art</div>
<svg class="a" style="left:381px;top:839px;" width="16" height="14" viewBox="0 0 16 14"><path d="M1 2 H6 L7.5 3.8 H15 V13 H1 Z" fill="#c4c4c4"/><rect x="1" y="5" width="14" height="8" fill="#c4c4c4"/></svg>
<div class="a t" style="left:401px;top:838.02px;font-size:15px;line-height:15px;color:#c4c4c4;transform:scaleX(0.9952);transform-origin:0 0;">Editor</div>
<svg class="a" style="left:381px;top:857px;" width="16" height="14" viewBox="0 0 16 14"><path d="M1 2 H6 L7.5 3.8 H15 V13 H1 Z" fill="#c4c4c4"/><rect x="1" y="5" width="14" height="8" fill="#c4c4c4"/></svg>
<div class="a t" style="left:401px;top:856.74px;font-size:15px;line-height:15px;color:#c4c4c4;transform:scaleX(1.0283);transform-origin:0 0;">IFC-Modelle</div>
<svg class="a" style="left:381px;top:876px;" width="16" height="14" viewBox="0 0 16 14"><path d="M1 2 H6 L7.5 3.8 H15 V13 H1 Z" fill="#c4c4c4"/><rect x="1" y="5" width="14" height="8" fill="#c4c4c4"/></svg>
<div class="a t" style="left:401px;top:875.46px;font-size:15px;line-height:15px;color:#c4c4c4;transform:scaleX(1.0340);transform-origin:0 0;">Models</div>
<svg class="a" style="left:381px;top:895px;" width="16" height="14" viewBox="0 0 16 14"><path d="M1 2 H6 L7.5 3.8 H15 V13 H1 Z" fill="#c4c4c4"/><rect x="1" y="5" width="14" height="8" fill="#c4c4c4"/></svg>
<div class="a t" style="left:401px;top:894.18px;font-size:15px;line-height:15px;color:#c4c4c4;transform:scaleX(1.0163);transform-origin:0 0;">Plugins</div>
<svg class="a" style="left:381px;top:914px;" width="16" height="14" viewBox="0 0 16 14"><path d="M1 2 H6 L7.5 3.8 H15 V13 H1 Z" fill="#c4c4c4"/><rect x="1" y="5" width="14" height="8" fill="#c4c4c4"/></svg>
<div class="a t" style="left:401px;top:912.90px;font-size:15px;line-height:15px;color:#c4c4c4;transform:scaleX(0.9865);transform-origin:0 0;">Prefabs</div>
<svg class="a" style="left:381px;top:932px;" width="16" height="14" viewBox="0 0 16 14"><path d="M1 2 H6 L7.5 3.8 H15 V13 H1 Z" fill="#c4c4c4"/><rect x="1" y="5" width="14" height="8" fill="#c4c4c4"/></svg>
<div class="a t" style="left:401px;top:931.62px;font-size:15px;line-height:15px;color:#c4c4c4;transform:scaleX(0.9763);transform-origin:0 0;">Resources</div>
<svg class="a" style="left:381px;top:951px;" width="16" height="14" viewBox="0 0 16 14"><path d="M1 2 H6 L7.5 3.8 H15 V13 H1 Z" fill="#c4c4c4"/><rect x="1" y="5" width="14" height="8" fill="#c4c4c4"/></svg>
<div class="a t" style="left:401px;top:950.34px;font-size:15px;line-height:15px;color:#c4c4c4;transform:scaleX(0.9767);transform-origin:0 0;">Samples</div>
<svg class="a" style="left:381px;top:970px;" width="16" height="14" viewBox="0 0 16 14"><path d="M1 2 H6 L7.5 3.8 H15 V13 H1 Z" fill="#c4c4c4"/><rect x="1" y="5" width="14" height="8" fill="#c4c4c4"/></svg>
<div class="a t" style="left:401px;top:969.06px;font-size:15px;line-height:15px;color:#c4c4c4;transform:scaleX(1.0193);transform-origin:0 0;">Scenes</div>
<svg class="a" style="left:381px;top:988px;" width="16" height="14" viewBox="0 0 16 14"><path d="M1 2 H6 L7.5 3.8 H15 V13 H1 Z" fill="#c4c4c4"/><rect x="1" y="5" width="14" height="8" fill="#c4c4c4"/></svg>
<div class="a t" style="left:401px;top:987.78px;font-size:15px;line-height:15px;color:#c4c4c4;transform:scaleX(1.0034);transform-origin:0 0;">Scripts</div>
<svg class="a" style="left:381px;top:1007px;" width="16" height="14" viewBox="0 0 16 14"><path d="M1 2 H6 L7.5 3.8 H15 V13 H1 Z" fill="#c4c4c4"/><rect x="1" y="5" width="14" height="8" fill="#c4c4c4"/></svg>
<div class="a t" style="left:401px;top:1006.50px;font-size:15px;line-height:15px;color:#c4c4c4;transform:scaleX(1.0332);transform-origin:0 0;">Settings</div>
<div class="a" style="left:382px;top:1026px;width:12px;height:1px;background:#9a9a9a;border-radius:1px 1px 0 0;"></div>
<div class="a" style="left:403px;top:1026px;width:3px;height:1px;background:#8a8a8a;"></div>
<div class="a" style="left:425px;top:1026px;width:3px;height:1px;background:#7a7a7a;"></div>
<div class="a" style="left:361px;top:1027px;width:979px;height:25px;background:#3e3e3e;"></div>
<div class="a" style="left:1262px;top:1039px;width:58px;height:2px;background:#5a5a5a;"></div>
<svg class="a" style="left:1255px;top:1033px;" width="14" height="14" viewBox="0 0 14 14"><circle cx="7" cy="7" r="6" fill="#a8a8a8"/></svg>
<div class="a" style="left:0px;top:1052px;width:1800px;height:26px;background:#191919;"></div>
<svg class="a" style="left:2px;top:1056px;" width="19" height="19" viewBox="0 0 19 19"><circle cx="9" cy="9" r="8" fill="#e6e6e6"/><path d="M12 15 L17 18 L15 12Z" fill="#e6e6e6"/><rect x="8" y="4" width="2.3" height="7" fill="#191919"/><circle cx="9.1" cy="13.5" r="1.3" fill="#191919"/></svg>
<div class="a t" style="left:23.6px;top:1057.30px;font-size:15px;line-height:15px;color:#d2d2d2;transform:scaleX(1.0090);transform-origin:0 0;">IfcConvert Stderr:</div>
<div class="a" style="left:1677px;top:1054px;width:1.2px;height:24px;background:#262626;"></div>
<div class="a" style="left:1707.5px;top:1054px;width:1.2px;height:24px;background:#262626;"></div>
<div class="a" style="left:1738px;top:1054px;width:1.2px;height:24px;background:#262626;"></div>
<div class="a" style="left:1768.5px;top:1054px;width:1.2px;height:24px;background:#262626;"></div>
<svg class="a" style="left:1683px;top:1057px;" width="20" height="19" viewBox="0 0 20 19"><g fill="#cfcfcf"><ellipse cx="10" cy="11.5" rx="5.3" ry="6.2"/><ellipse cx="10" cy="4.8" rx="3" ry="2.4"/></g><g fill="none" stroke="#cfcfcf" stroke-width="1.5" stroke-linecap="round"><path d="M6.5 3.5 L5 1.5 M13.5 3.5 L15 1.5 M4.5 8 L2.5 6.5 M15.5 8 L17.5 6.5 M4.5 12 L1.5 12 M15.5 12 L18.5 12 M5 15.5 L2.5 17.5 M15 15.5 L17.5 17.5"/></g><path d="M2.5 1.5 L17.5 17.8" stroke="#191919" stroke-width="2.6"/><path d="M2 1 L17.5 17.8" stroke="#cfcfcf" stroke-width="1.3"/></svg>
<svg class="a" style="left:1714px;top:1057px;" width="20" height="19" viewBox="0 0 20 19"><g fill="#cfcfcf"><ellipse cx="10" cy="4" rx="6.5" ry="3"/><path d="M3.5 6 C3.5 9.5 16.5 9.5 16.5 6 V8.5 C16.5 12 3.5 12 3.5 8.5Z"/><path d="M3.5 11 C3.5 14.5 16.5 14.5 16.5 11 V13.5 C16.5 17.5 3.5 17.5 3.5 13.5Z"/></g><path d="M2.5 1.5 L17.5 17.8" stroke="#191919" stroke-width="2.6"/><path d="M2 1 L17.5 17.8" stroke="#cfcfcf" stroke-width="1.3"/></svg>
<svg class="a" style="left:1744px;top:1057px;" width="20" height="19" viewBox="0 0 20 19"><g fill="none" stroke="#cfcfcf" stroke-width="1.6"><path d="M15.5 5 A7.5 7.5 0 0 0 3 6.5"/><path d="M4.5 14 A7.5 7.5 0 0 0 17 12.5"/></g><path d="M13.5 2 L17.5 1.5 L17 6Z M6.5 17 L2.5 17.5 L3 13Z" fill="#cfcfcf"/><circle cx="10" cy="9" r="3" fill="#cfcfcf"/><rect x="8.6" y="11.5" width="2.8" height="2.5" fill="#cfcfcf"/><path d="M2.5 1.5 L17.5 17.8" stroke="#191919" stroke-width="2.6"/><path d="M2 1 L17.5 17.8" stroke="#cfcfcf" stroke-width="1.3"/></svg>
<svg class="a" style="left:1775px;top:1057px;" width="19" height="19" viewBox="0 0 19 19"><circle cx="9" cy="9.3" r="7.8" fill="none" stroke="#cfcfcf" stroke-width="1.4"/><path d="M5.5 9.3 L8.2 12 L12.8 7" fill="none" stroke="#cfcfcf" stroke-width="1.8"/></svg>
</body></html>
